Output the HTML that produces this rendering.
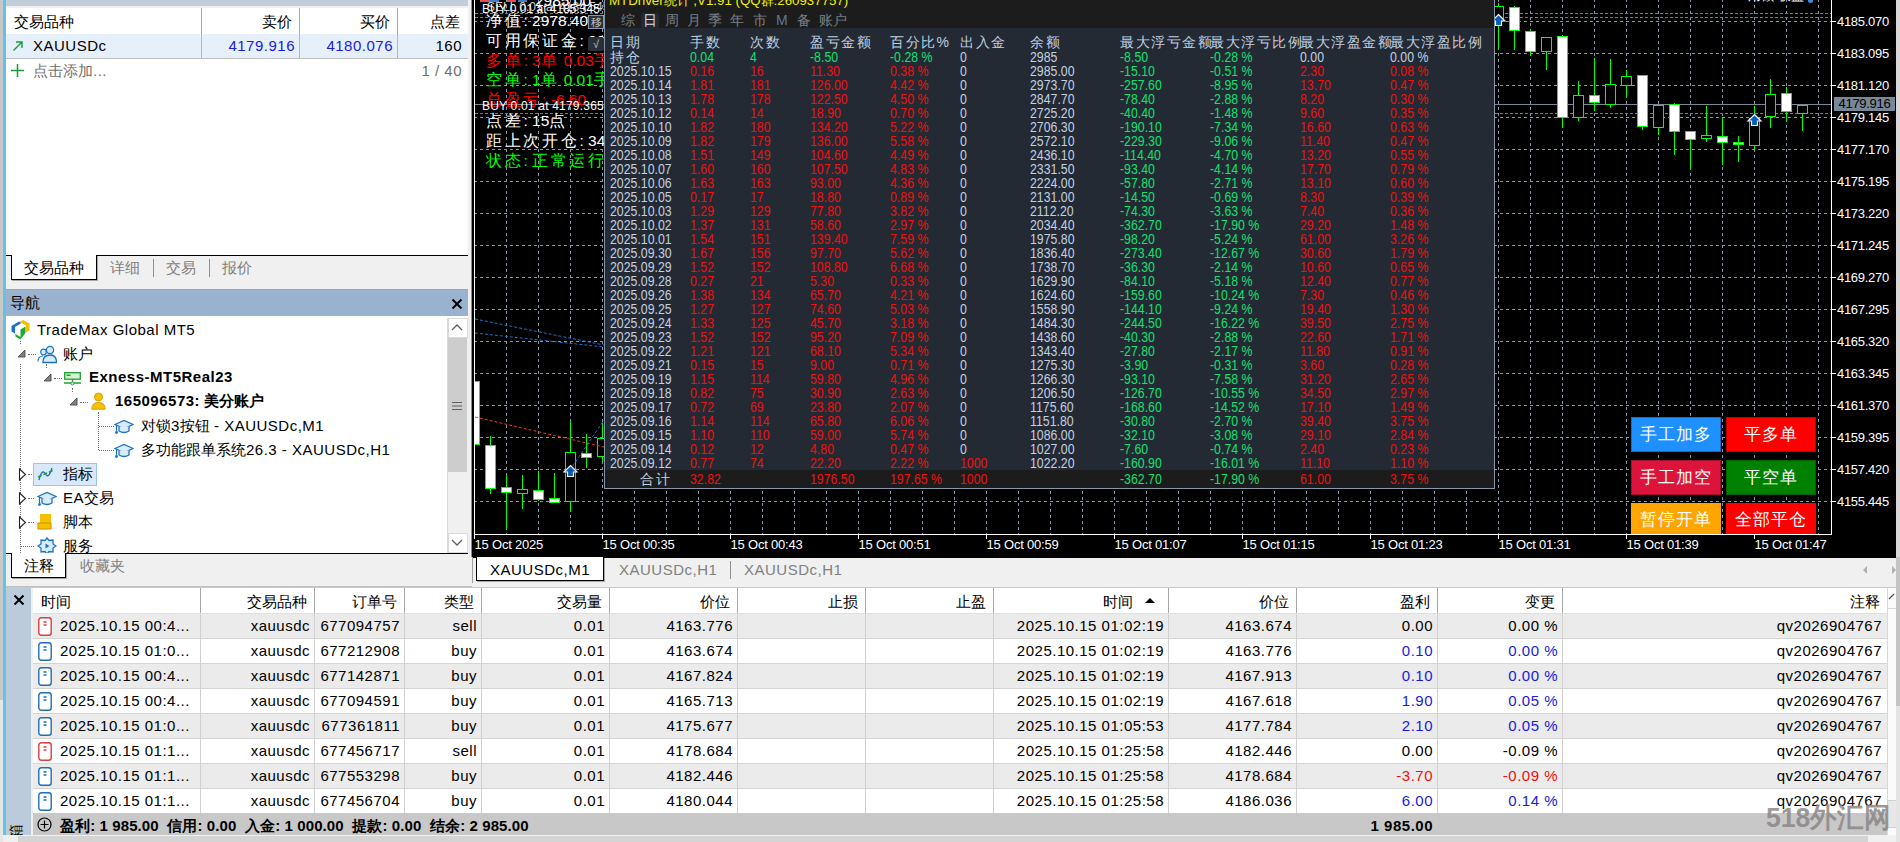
<!DOCTYPE html><html><head><meta charset="utf-8"><style>

*{box-sizing:border-box}
html,body{margin:0;padding:0;width:1900px;height:842px;overflow:hidden;background:#f0f0f0;font-family:"Liberation Sans",sans-serif;}
.ab{position:absolute;white-space:nowrap}
.t15{font-size:15px;line-height:18px}
.r{text-align:right}
.L{letter-spacing:0.5px}
.d{font-size:14px;line-height:14px;transform:scaleX(0.88);transform-origin:0 0}

</style></head><body>
<div class="ab" style="left:0;top:0;width:3px;height:700px;background:#c8c8c8"></div>
<div class="ab" style="left:0;top:700px;width:3px;height:142px;background:#e6e6e6"></div>
<div class="ab" style="left:3px;top:0;width:3px;height:835px;background:#5ec4ea"></div>
<div class="ab" style="left:6px;top:0;width:462px;height:6px;background:#c0cedc"></div>
<div class="ab" style="left:6px;top:6px;width:462px;height:2px;background:#f0f0f0"></div>
<div class="ab" style="left:6px;top:8px;width:462px;height:247px;background:#fff"></div>
<div class="ab" style="left:201px;top:8px;width:1px;height:50px;background:#a8a8a8"></div>
<div class="ab" style="left:299px;top:8px;width:1px;height:50px;background:#a8a8a8"></div>
<div class="ab" style="left:397px;top:8px;width:1px;height:50px;background:#a8a8a8"></div>
<div class="ab t15" style="left:14px;top:13px;color:#000">交易品种</div>
<div class="ab t15 r" style="left:200px;width:92px;top:13px">卖价</div>
<div class="ab t15 r" style="left:298px;width:92px;top:13px">买价</div>
<div class="ab t15 r" style="left:396px;width:64px;top:13px">点差</div>
<div class="ab" style="left:6px;top:34px;width:462px;height:24px;background:#e6f0fb"></div>
<div class="ab" style="left:201px;top:34px;width:1px;height:24px;background:#b8b8b8"></div>
<div class="ab" style="left:299px;top:34px;width:1px;height:24px;background:#b8b8b8"></div>
<div class="ab" style="left:397px;top:34px;width:1px;height:24px;background:#b8b8b8"></div>
<div class="ab" style="left:6px;top:58px;width:462px;height:1px;background:#c0c0c0"></div>
<svg class="ab" style="left:12px;top:40px" width="12" height="12"><path d="M1.5 10.5 L10 2 M4 2 H10 V8" stroke="#1a9a3a" stroke-width="1.4" fill="none"/></svg>
<div class="ab t15" style="left:33px;top:37px"><span class="L">XAUUSDc</span></div>
<div class="ab t15 r" style="left:200px;width:95px;top:37px;color:#1a1ae0"><span class="L">4179.916</span></div>
<div class="ab t15 r" style="left:298px;width:95px;top:37px;color:#1a1ae0"><span class="L">4180.076</span></div>
<div class="ab t15 r" style="left:396px;width:66px;top:37px"><span class="L">160</span></div>
<svg class="ab" style="left:10px;top:63px" width="15" height="15"><path d="M7.5 1 V14 M1 7.5 H14" stroke="#1a9a3a" stroke-width="1.5"/></svg>
<div class="ab t15" style="left:33px;top:62px;color:#707070">点击添加<span class="L">...</span></div>
<div class="ab t15 r" style="left:396px;width:66px;top:62px;color:#707070"><span class="L">1 / 40</span></div>
<div class="ab" style="left:6px;top:255px;width:462px;height:34px;background:#f0f0f0;border-top:1px solid #000"></div>
<div class="ab" style="left:11px;top:255px;width:86px;height:25px;background:#fff;border:1px solid #000;border-top:none;box-shadow:1px 1px 0 #a8a8a8"></div>
<div class="ab t15" style="left:24px;top:259px">交易品种</div>
<div class="ab t15" style="left:110px;top:259px;color:#808080">详细</div>
<div class="ab" style="left:153px;top:259px;width:1px;height:18px;background:#909090"></div>
<div class="ab t15" style="left:166px;top:259px;color:#808080">交易</div>
<div class="ab" style="left:209px;top:259px;width:1px;height:18px;background:#909090"></div>
<div class="ab t15" style="left:222px;top:259px;color:#808080">报价</div>
<div class="ab" style="left:6px;top:289px;width:462px;height:27px;background:#98b2d0"></div>
<div class="ab t15" style="left:10px;top:294px">导航</div>
<div class="ab" style="left:6px;top:289px;width:462px;height:1px;background:#a4a4a4"></div>
<svg class="ab" style="left:451px;top:298px" width="12" height="11"><path d="M1.5 1.5 L10.5 10.5 M10.5 1.5 L1.5 10.5" stroke="#000" stroke-width="2"/></svg>
<div class="ab" style="left:6px;top:316px;width:462px;height:237px;background:#fff"></div>
<div class="ab" style="left:447px;top:318px;width:21px;height:235px;background:#f0f0f0;border-left:1px solid #dadada"></div>
<div class="ab" style="left:448px;top:318px;width:20px;height:20px;background:#fff;border:1px solid #dadada"></div>
<svg class="ab" style="left:450px;top:322px" width="14" height="10"><path d="M2 8 L7 3 L12 8" stroke="#606060" stroke-width="1.3" fill="none"/></svg>
<div class="ab" style="left:448px;top:338px;width:19px;height:134px;background:#cdcdcd"></div>
<svg class="ab" style="left:451px;top:400px" width="12" height="12"><path d="M1 2.5 H11 M1 6 H11 M1 9.5 H11" stroke="#606060" stroke-width="1.2"/></svg>
<div class="ab" style="left:448px;top:533px;width:20px;height:20px;background:#fff;border:1px solid #dadada"></div>
<svg class="ab" style="left:450px;top:538px" width="14" height="10"><path d="M2 2 L7 7 L12 2" stroke="#606060" stroke-width="1.3" fill="none"/></svg>
<div class="ab" style="left:6px;top:553px;width:462px;height:1px;background:#000"></div>
<svg class="ab" style="left:10px;top:319px" width="20" height="21"><path d="M1.5 7 L9 2.5 L11.5 4 L5 8 L5 14.5 L1.5 12.5 Z" fill="#1a6fd0"/><path d="M9.5 2.8 L13 1 L19.5 4.5 L19.5 11.5 L16 13.5 L16 6.5 Z" fill="#f2c200"/><path d="M5.5 15 L10.5 18 L10.5 10.5 L15.5 7.5 L15.5 14 L10.5 20.5 L5.5 17.5 Z" fill="#1ea83a"/></svg>
<div class="ab t15" style="left:37px;top:321px"><span class="L">TradeMax Global MT5</span></div>
<div class="ab" style="left:20px;top:364px;width:0;height:189px;border-left:1px dotted #707070"></div>
<div class="ab" style="left:20px;top:341px;width:0;height:3px;border-left:1px dotted #707070"></div>
<svg class="ab" style="left:17px;top:349px" width="9" height="9"><path d="M8 1 V8 H1 Z" fill="#808080" stroke="#404040" stroke-width="0.8"/></svg>
<div class="ab" style="left:28px;top:354px;width:8px;height:0;border-top:1px dotted #707070"></div>
<svg class="ab" style="left:37px;top:345px" width="20" height="19"><circle cx="13" cy="5" r="3.6" fill="#d8ecfa" stroke="#1f72c0" stroke-width="1.3"/><path d="M6 17.5 Q6 10 13 10 Q19.5 10 19.5 17.5 Z" fill="#d8ecfa" stroke="#1f72c0" stroke-width="1.3"/><circle cx="6.5" cy="7" r="2.8" fill="#d8ecfa" stroke="#1f72c0" stroke-width="1.2"/><path d="M1 16.5 Q1 11 6 11" fill="none" stroke="#1f72c0" stroke-width="1.2"/></svg>
<div class="ab t15" style="left:63px;top:345px">账户</div>
<div class="ab" style="left:46px;top:364px;width:0;height:4px;border-left:1px dotted #707070"></div>
<svg class="ab" style="left:43px;top:373px" width="9" height="9"><path d="M8 1 V8 H1 Z" fill="#808080" stroke="#404040" stroke-width="0.8"/></svg>
<div class="ab" style="left:54px;top:378px;width:8px;height:0;border-top:1px dotted #707070"></div>
<svg class="ab" style="left:64px;top:372px" width="17" height="14"><rect x="0.7" y="0.7" width="15.6" height="6.5" fill="#d8f0d8" stroke="#20a030" stroke-width="1.3"/><rect x="2.5" y="2.5" width="4" height="1.5" fill="#20a030"/><path d="M8.5 7 V11 M0 11 H17" stroke="#20a030" stroke-width="1.3"/><circle cx="8.5" cy="11.5" r="1.5" fill="#fff" stroke="#20a030"/></svg>
<div class="ab t15" style="left:89px;top:368px;font-weight:bold"><span class="L">Exness-MT5Real23</span></div>
<div class="ab" style="left:72px;top:388px;width:0;height:4px;border-left:1px dotted #707070"></div>
<svg class="ab" style="left:69px;top:397px" width="9" height="9"><path d="M8 1 V8 H1 Z" fill="#808080" stroke="#404040" stroke-width="0.8"/></svg>
<div class="ab" style="left:80px;top:402px;width:8px;height:0;border-top:1px dotted #707070"></div>
<svg class="ab" style="left:91px;top:392px" width="15" height="18"><circle cx="7.5" cy="5" r="4" fill="#f5c000" stroke="#e0a000"/><path d="M0.8 17.2 Q0.8 10.5 7.5 10.5 Q14.2 10.5 14.2 17.2 Z" fill="#f5c000" stroke="#e0a000"/></svg>
<div class="ab t15" style="left:115px;top:392px;font-weight:bold"><span class="L">165096573:</span> 美分账户</div>
<div class="ab" style="left:98px;top:412px;width:0;height:38px;border-left:1px dotted #707070"></div>
<div class="ab" style="left:99px;top:426px;width:15px;height:0;border-top:1px dotted #707070"></div>
<div class="ab" style="left:99px;top:450px;width:15px;height:0;border-top:1px dotted #707070"></div>
<svg class="ab" style="left:114px;top:419px" width="20" height="16"><path d="M1 5.5 L10 1.5 L19 5.5 L10 9.5 Z" fill="#d8ecfa" stroke="#1f72c0" stroke-width="1.3"/><path d="M5 7.5 V12 Q10 15 15 12 V7.5" fill="#d8ecfa" stroke="#1f72c0" stroke-width="1.3"/><path d="M2.5 6 V12.5" stroke="#1f72c0" stroke-width="1.2"/><circle cx="2.5" cy="13.5" r="1.4" fill="#1f72c0"/></svg>
<div class="ab t15" style="left:141px;top:417px">对锁<span class="L">3</span>按钮 <span class="L">- XAUUSDc,M1</span></div>
<svg class="ab" style="left:114px;top:443px" width="20" height="16"><path d="M1 5.5 L10 1.5 L19 5.5 L10 9.5 Z" fill="#d8ecfa" stroke="#1f72c0" stroke-width="1.3"/><path d="M5 7.5 V12 Q10 15 15 12 V7.5" fill="#d8ecfa" stroke="#1f72c0" stroke-width="1.3"/><path d="M2.5 6 V12.5" stroke="#1f72c0" stroke-width="1.2"/><circle cx="2.5" cy="13.5" r="1.4" fill="#1f72c0"/></svg>
<div class="ab t15" style="left:141px;top:441px">多功能跟单系统<span class="L">26.3 - XAUUSDc,H1</span></div>
<svg class="ab" style="left:18px;top:468px" width="9" height="13"><path d="M1.5 1 L7.5 6.5 L1.5 12 Z" fill="#fff" stroke="#202020" stroke-width="1.1"/></svg>
<div class="ab" style="left:28px;top:474px;width:6px;height:0;border-top:1px dotted #707070"></div>
<div class="ab" style="left:33px;top:463px;width:64px;height:23px;background:#d9e8fa;border:1px solid #99c4f0"></div>
<svg class="ab" style="left:37px;top:466px" width="19" height="16"><path d="M2 14 Q5 2 8.5 8 Q11.5 13.5 15 2" fill="none" stroke="#1f6fb8" stroke-width="1.3"/><path d="M1 11 L17 4" stroke="#20a030" stroke-width="1.5" stroke-dasharray="4 2"/></svg>
<div class="ab t15" style="left:63px;top:465px">指标</div>
<svg class="ab" style="left:18px;top:492px" width="9" height="13"><path d="M1.5 1 L7.5 6.5 L1.5 12 Z" fill="#fff" stroke="#202020" stroke-width="1.1"/></svg>
<div class="ab" style="left:28px;top:498px;width:6px;height:0;border-top:1px dotted #707070"></div>
<svg class="ab" style="left:37px;top:491px" width="20" height="16"><path d="M1 5.5 L10 1.5 L19 5.5 L10 9.5 Z" fill="#d8ecfa" stroke="#1f72c0" stroke-width="1.3"/><path d="M5 7.5 V12 Q10 15 15 12 V7.5" fill="#d8ecfa" stroke="#1f72c0" stroke-width="1.3"/><path d="M2.5 6 V12.5" stroke="#1f72c0" stroke-width="1.2"/><circle cx="2.5" cy="13.5" r="1.4" fill="#1f72c0"/></svg>
<div class="ab t15" style="left:63px;top:489px"><span class="L">EA</span>交易</div>
<svg class="ab" style="left:18px;top:516px" width="9" height="13"><path d="M1.5 1 L7.5 6.5 L1.5 12 Z" fill="#fff" stroke="#202020" stroke-width="1.1"/></svg>
<div class="ab" style="left:28px;top:522px;width:6px;height:0;border-top:1px dotted #707070"></div>
<svg class="ab" style="left:37px;top:513px" width="17" height="17"><rect x="3" y="1" width="11" height="12" fill="#f5c000"/><rect x="1" y="10" width="13" height="6" fill="#f5c000" stroke="#d09000"/></svg>
<div class="ab t15" style="left:63px;top:513px">脚本</div>
<div class="ab" style="left:20px;top:546px;width:14px;height:0;border-top:1px dotted #707070"></div>
<svg class="ab" style="left:37px;top:537px" width="20" height="16"><path d="M10 1 L12 3.5 L16 3 L16 7 L19 9 L16 11 L16 15 L12 14.5 L10 17 L8 14.5 L4 15 L4 11 L1 9 L4 7 L4 3 L8 3.5 Z" fill="#d8ecfa" stroke="#1f72c0" stroke-width="1.3"/><path d="M8.5 6.5 L12.5 9 L8.5 11.5 Z" fill="#1f72c0"/></svg>
<div class="ab" style="left:6px;top:316px;width:441px;height:237px;overflow:hidden"><div class="ab t15" style="left:57px;top:221px">服务</div></div>
<div class="ab" style="left:6px;top:553px;width:462px;height:1px;background:#000"></div>
<div class="ab" style="left:11px;top:553px;width:55px;height:25px;background:#fff;border:1px solid #000;border-top:none;box-shadow:1px 1px 0 #a8a8a8"></div>
<div class="ab t15" style="left:24px;top:557px">注释</div>
<div class="ab t15" style="left:80px;top:557px;color:#808080">收藏夹</div>
<div class="ab" style="left:6px;top:586px;width:466px;height:1px;background:#c0c0c0"></div>
<div class="ab" style="left:468px;top:0;width:4px;height:557px;background:#f0f0f0"></div>
<div class="ab" style="left:471px;top:0;width:1px;height:557px;background:#8c8c8c"></div>
<div class="ab" style="left:472px;top:0;width:1424px;height:558px;background:#000;overflow:hidden">
<svg width="1424" height="557" style="position:absolute;left:0;top:0">
<line x1="2" y1="21.5" x2="1359" y2="21.5" stroke="#8296ac" stroke-width="1" stroke-dasharray="3 3"/>
<line x1="2" y1="53.5" x2="1359" y2="53.5" stroke="#8296ac" stroke-width="1" stroke-dasharray="3 3"/>
<line x1="2" y1="85.5" x2="1359" y2="85.5" stroke="#8296ac" stroke-width="1" stroke-dasharray="3 3"/>
<line x1="2" y1="117.5" x2="1359" y2="117.5" stroke="#8296ac" stroke-width="1" stroke-dasharray="3 3"/>
<line x1="2" y1="149.5" x2="1359" y2="149.5" stroke="#8296ac" stroke-width="1" stroke-dasharray="3 3"/>
<line x1="2" y1="181.5" x2="1359" y2="181.5" stroke="#8296ac" stroke-width="1" stroke-dasharray="3 3"/>
<line x1="2" y1="213.5" x2="1359" y2="213.5" stroke="#8296ac" stroke-width="1" stroke-dasharray="3 3"/>
<line x1="2" y1="245.5" x2="1359" y2="245.5" stroke="#8296ac" stroke-width="1" stroke-dasharray="3 3"/>
<line x1="2" y1="277.5" x2="1359" y2="277.5" stroke="#8296ac" stroke-width="1" stroke-dasharray="3 3"/>
<line x1="2" y1="309.5" x2="1359" y2="309.5" stroke="#8296ac" stroke-width="1" stroke-dasharray="3 3"/>
<line x1="2" y1="341.5" x2="1359" y2="341.5" stroke="#8296ac" stroke-width="1" stroke-dasharray="3 3"/>
<line x1="2" y1="373.5" x2="1359" y2="373.5" stroke="#8296ac" stroke-width="1" stroke-dasharray="3 3"/>
<line x1="2" y1="405.5" x2="1359" y2="405.5" stroke="#8296ac" stroke-width="1" stroke-dasharray="3 3"/>
<line x1="2" y1="437.5" x2="1359" y2="437.5" stroke="#8296ac" stroke-width="1" stroke-dasharray="3 3"/>
<line x1="2" y1="469.5" x2="1359" y2="469.5" stroke="#8296ac" stroke-width="1" stroke-dasharray="3 3"/>
<line x1="2" y1="501.5" x2="1359" y2="501.5" stroke="#8296ac" stroke-width="1" stroke-dasharray="3 3"/>
<line x1="34.5" y1="-1" x2="34.5" y2="534" stroke="#8296ac" stroke-width="1" stroke-dasharray="3 3"/>
<line x1="66.5" y1="-1" x2="66.5" y2="534" stroke="#8296ac" stroke-width="1" stroke-dasharray="3 3"/>
<line x1="98.5" y1="-1" x2="98.5" y2="534" stroke="#8296ac" stroke-width="1" stroke-dasharray="3 3"/>
<line x1="130.5" y1="-1" x2="130.5" y2="534" stroke="#8296ac" stroke-width="1" stroke-dasharray="3 3"/>
<line x1="162.5" y1="-1" x2="162.5" y2="534" stroke="#8296ac" stroke-width="1" stroke-dasharray="3 3"/>
<line x1="194.5" y1="-1" x2="194.5" y2="534" stroke="#8296ac" stroke-width="1" stroke-dasharray="3 3"/>
<line x1="226.5" y1="-1" x2="226.5" y2="534" stroke="#8296ac" stroke-width="1" stroke-dasharray="3 3"/>
<line x1="258.5" y1="-1" x2="258.5" y2="534" stroke="#8296ac" stroke-width="1" stroke-dasharray="3 3"/>
<line x1="290.5" y1="-1" x2="290.5" y2="534" stroke="#8296ac" stroke-width="1" stroke-dasharray="3 3"/>
<line x1="322.5" y1="-1" x2="322.5" y2="534" stroke="#8296ac" stroke-width="1" stroke-dasharray="3 3"/>
<line x1="354.5" y1="-1" x2="354.5" y2="534" stroke="#8296ac" stroke-width="1" stroke-dasharray="3 3"/>
<line x1="386.5" y1="-1" x2="386.5" y2="534" stroke="#8296ac" stroke-width="1" stroke-dasharray="3 3"/>
<line x1="418.5" y1="-1" x2="418.5" y2="534" stroke="#8296ac" stroke-width="1" stroke-dasharray="3 3"/>
<line x1="450.5" y1="-1" x2="450.5" y2="534" stroke="#8296ac" stroke-width="1" stroke-dasharray="3 3"/>
<line x1="482.5" y1="-1" x2="482.5" y2="534" stroke="#8296ac" stroke-width="1" stroke-dasharray="3 3"/>
<line x1="514.5" y1="-1" x2="514.5" y2="534" stroke="#8296ac" stroke-width="1" stroke-dasharray="3 3"/>
<line x1="546.5" y1="-1" x2="546.5" y2="534" stroke="#8296ac" stroke-width="1" stroke-dasharray="3 3"/>
<line x1="578.5" y1="-1" x2="578.5" y2="534" stroke="#8296ac" stroke-width="1" stroke-dasharray="3 3"/>
<line x1="610.5" y1="-1" x2="610.5" y2="534" stroke="#8296ac" stroke-width="1" stroke-dasharray="3 3"/>
<line x1="642.5" y1="-1" x2="642.5" y2="534" stroke="#8296ac" stroke-width="1" stroke-dasharray="3 3"/>
<line x1="674.5" y1="-1" x2="674.5" y2="534" stroke="#8296ac" stroke-width="1" stroke-dasharray="3 3"/>
<line x1="706.5" y1="-1" x2="706.5" y2="534" stroke="#8296ac" stroke-width="1" stroke-dasharray="3 3"/>
<line x1="738.5" y1="-1" x2="738.5" y2="534" stroke="#8296ac" stroke-width="1" stroke-dasharray="3 3"/>
<line x1="770.5" y1="-1" x2="770.5" y2="534" stroke="#8296ac" stroke-width="1" stroke-dasharray="3 3"/>
<line x1="802.5" y1="-1" x2="802.5" y2="534" stroke="#8296ac" stroke-width="1" stroke-dasharray="3 3"/>
<line x1="834.5" y1="-1" x2="834.5" y2="534" stroke="#8296ac" stroke-width="1" stroke-dasharray="3 3"/>
<line x1="866.5" y1="-1" x2="866.5" y2="534" stroke="#8296ac" stroke-width="1" stroke-dasharray="3 3"/>
<line x1="898.5" y1="-1" x2="898.5" y2="534" stroke="#8296ac" stroke-width="1" stroke-dasharray="3 3"/>
<line x1="930.5" y1="-1" x2="930.5" y2="534" stroke="#8296ac" stroke-width="1" stroke-dasharray="3 3"/>
<line x1="962.5" y1="-1" x2="962.5" y2="534" stroke="#8296ac" stroke-width="1" stroke-dasharray="3 3"/>
<line x1="994.5" y1="-1" x2="994.5" y2="534" stroke="#8296ac" stroke-width="1" stroke-dasharray="3 3"/>
<line x1="1026.5" y1="-1" x2="1026.5" y2="534" stroke="#8296ac" stroke-width="1" stroke-dasharray="3 3"/>
<line x1="1058.5" y1="-1" x2="1058.5" y2="534" stroke="#8296ac" stroke-width="1" stroke-dasharray="3 3"/>
<line x1="1090.5" y1="-1" x2="1090.5" y2="534" stroke="#8296ac" stroke-width="1" stroke-dasharray="3 3"/>
<line x1="1122.5" y1="-1" x2="1122.5" y2="534" stroke="#8296ac" stroke-width="1" stroke-dasharray="3 3"/>
<line x1="1154.5" y1="-1" x2="1154.5" y2="534" stroke="#8296ac" stroke-width="1" stroke-dasharray="3 3"/>
<line x1="1186.5" y1="-1" x2="1186.5" y2="534" stroke="#8296ac" stroke-width="1" stroke-dasharray="3 3"/>
<line x1="1218.5" y1="-1" x2="1218.5" y2="534" stroke="#8296ac" stroke-width="1" stroke-dasharray="3 3"/>
<line x1="1250.5" y1="-1" x2="1250.5" y2="534" stroke="#8296ac" stroke-width="1" stroke-dasharray="3 3"/>
<line x1="1282.5" y1="-1" x2="1282.5" y2="534" stroke="#8296ac" stroke-width="1" stroke-dasharray="3 3"/>
<line x1="1314.5" y1="-1" x2="1314.5" y2="534" stroke="#8296ac" stroke-width="1" stroke-dasharray="3 3"/>
<line x1="1346.5" y1="-1" x2="1346.5" y2="534" stroke="#8296ac" stroke-width="1" stroke-dasharray="3 3"/>
<line x1="3" y1="13.5" x2="1359" y2="13.5" stroke="#00d000" stroke-width="1" stroke-dasharray="3 2"/>
<line x1="3" y1="17.5" x2="1359" y2="17.5" stroke="#00d000" stroke-width="1" stroke-dasharray="3 2"/>
<line x1="3" y1="113.5" x2="1359" y2="113.5" stroke="#00d000" stroke-width="1" stroke-dasharray="3 2"/>
<line x1="3" y1="104.5" x2="1359" y2="104.5" stroke="#7a8898" stroke-width="1"/>
<line x1="2.5" y1="372" x2="2.5" y2="446" stroke="#00ff00" stroke-width="1"/>
<rect x="-2.5" y="381.5" width="10" height="63" fill="#fff" stroke="#00ff00" stroke-width="1"/>
<line x1="18.5" y1="436" x2="18.5" y2="494" stroke="#00ff00" stroke-width="1"/>
<rect x="13.5" y="445.5" width="10" height="43" fill="#fff" stroke="#00ff00" stroke-width="1"/>
<line x1="34.5" y1="476" x2="34.5" y2="529" stroke="#00ff00" stroke-width="1"/>
<rect x="29.5" y="487.5" width="10" height="5" fill="#fff" stroke="#00ff00" stroke-width="1"/>
<line x1="50.5" y1="475" x2="50.5" y2="509" stroke="#00ff00" stroke-width="1"/>
<rect x="45.5" y="489.5" width="10" height="4" fill="#000" stroke="#00ff00" stroke-width="1"/>
<line x1="66.5" y1="471" x2="66.5" y2="501" stroke="#00ff00" stroke-width="1"/>
<rect x="61.5" y="490.5" width="10" height="9" fill="#fff" stroke="#00ff00" stroke-width="1"/>
<line x1="82.5" y1="473" x2="82.5" y2="502" stroke="#00ff00" stroke-width="1"/>
<rect x="77.5" y="498.5" width="10" height="4" fill="#fff" stroke="#00ff00" stroke-width="1"/>
<line x1="98.5" y1="421" x2="98.5" y2="511" stroke="#00ff00" stroke-width="1"/>
<rect x="93.5" y="452.5" width="10" height="49" fill="#000" stroke="#00ff00" stroke-width="1"/>
<line x1="114.5" y1="434" x2="114.5" y2="468" stroke="#00ff00" stroke-width="1"/>
<rect x="109.5" y="453.5" width="10" height="4" fill="#fff" stroke="#00ff00" stroke-width="1"/>
<line x1="130.5" y1="423" x2="130.5" y2="462" stroke="#00ff00" stroke-width="1"/>
<rect x="125.5" y="438.5" width="10" height="18" fill="#000" stroke="#00ff00" stroke-width="1"/>
<line x1="1026.5" y1="3" x2="1026.5" y2="49" stroke="#00ff00" stroke-width="1"/>
<rect x="1021.5" y="6.5" width="10" height="12" fill="#000" stroke="#00ff00" stroke-width="1"/>
<line x1="1042.5" y1="6" x2="1042.5" y2="50" stroke="#00ff00" stroke-width="1"/>
<rect x="1037.5" y="7.5" width="10" height="23" fill="#fff" stroke="#00ff00" stroke-width="1"/>
<line x1="1058.5" y1="29" x2="1058.5" y2="55" stroke="#00ff00" stroke-width="1"/>
<rect x="1053.5" y="31.5" width="10" height="20" fill="#fff" stroke="#00ff00" stroke-width="1"/>
<line x1="1074.5" y1="37" x2="1074.5" y2="70" stroke="#00ff00" stroke-width="1"/>
<rect x="1069.5" y="37.5" width="10" height="14" fill="#000" stroke="#00ff00" stroke-width="1"/>
<line x1="1090.5" y1="36" x2="1090.5" y2="127" stroke="#00ff00" stroke-width="1"/>
<rect x="1085.5" y="36.5" width="10" height="81" fill="#fff" stroke="#00ff00" stroke-width="1"/>
<line x1="1106.5" y1="81" x2="1106.5" y2="121" stroke="#00ff00" stroke-width="1"/>
<rect x="1101.5" y="95.5" width="10" height="22" fill="#000" stroke="#00ff00" stroke-width="1"/>
<line x1="1122.5" y1="58" x2="1122.5" y2="111" stroke="#00ff00" stroke-width="1"/>
<rect x="1117.5" y="95.5" width="10" height="7" fill="#fff" stroke="#00ff00" stroke-width="1"/>
<line x1="1138.5" y1="59" x2="1138.5" y2="108" stroke="#00ff00" stroke-width="1"/>
<rect x="1133.5" y="84.5" width="10" height="20" fill="#000" stroke="#00ff00" stroke-width="1"/>
<line x1="1154.5" y1="70" x2="1154.5" y2="97" stroke="#00ff00" stroke-width="1"/>
<rect x="1149.5" y="76.5" width="10" height="9" fill="#000" stroke="#00ff00" stroke-width="1"/>
<line x1="1170.5" y1="75" x2="1170.5" y2="130" stroke="#00ff00" stroke-width="1"/>
<rect x="1165.5" y="75.5" width="10" height="51" fill="#fff" stroke="#00ff00" stroke-width="1"/>
<line x1="1186.5" y1="105" x2="1186.5" y2="135" stroke="#00ff00" stroke-width="1"/>
<rect x="1181.5" y="105.5" width="10" height="22" fill="#000" stroke="#00ff00" stroke-width="1"/>
<line x1="1202.5" y1="103" x2="1202.5" y2="155" stroke="#00ff00" stroke-width="1"/>
<rect x="1197.5" y="104.5" width="10" height="27" fill="#fff" stroke="#00ff00" stroke-width="1"/>
<line x1="1218.5" y1="131" x2="1218.5" y2="170" stroke="#00ff00" stroke-width="1"/>
<rect x="1213.5" y="131.5" width="10" height="8" fill="#fff" stroke="#00ff00" stroke-width="1"/>
<line x1="1234.5" y1="106" x2="1234.5" y2="142" stroke="#00ff00" stroke-width="1"/>
<rect x="1229.5" y="135.5" width="10" height="3" fill="#000" stroke="#00ff00" stroke-width="1"/>
<line x1="1250.5" y1="118" x2="1250.5" y2="165" stroke="#00ff00" stroke-width="1"/>
<rect x="1245.5" y="136.5" width="10" height="6" fill="#fff" stroke="#00ff00" stroke-width="1"/>
<line x1="1266.5" y1="136" x2="1266.5" y2="162" stroke="#00ff00" stroke-width="1"/>
<rect x="1261.5" y="142.5" width="10" height="2" fill="#fff" stroke="#00ff00" stroke-width="1"/>
<line x1="1282.5" y1="106" x2="1282.5" y2="150" stroke="#00ff00" stroke-width="1"/>
<rect x="1277.5" y="118.5" width="10" height="27" fill="#000" stroke="#00ff00" stroke-width="1"/>
<line x1="1298.5" y1="79" x2="1298.5" y2="128" stroke="#00ff00" stroke-width="1"/>
<rect x="1293.5" y="94.5" width="10" height="22" fill="#000" stroke="#00ff00" stroke-width="1"/>
<line x1="1314.5" y1="87" x2="1314.5" y2="121" stroke="#00ff00" stroke-width="1"/>
<rect x="1309.5" y="93.5" width="10" height="18" fill="#fff" stroke="#00ff00" stroke-width="1"/>
<line x1="1330.5" y1="105" x2="1330.5" y2="131" stroke="#00ff00" stroke-width="1"/>
<rect x="1325.5" y="105.5" width="10" height="8" fill="#000" stroke="#00ff00" stroke-width="1"/>
<path d="M3 319 L132 345" stroke="#1e70d0" stroke-width="1" stroke-dasharray="3 2" fill="none"/>
<path d="M3 333 L132 347" stroke="#1e70d0" stroke-width="1" stroke-dasharray="3 2" fill="none"/>
<path d="M3 417 L132 447" stroke="#e04020" stroke-width="1" stroke-dasharray="3 2" fill="none"/>
<path d="M98 470 L132 420" stroke="#1e70d0" stroke-width="1" stroke-dasharray="3 2" fill="none"/>
<path d="M98.5 465.5 L105.0 472 L101.5 472 L101.5 476.5 L95.5 476.5 L95.5 472 L92.0 472 Z" fill="#0a5cb8" stroke="#f0f4ff" stroke-width="1.2"/>
<path d="M1282.5 114.5 L1289.0 121 L1285.5 121 L1285.5 125.5 L1279.5 125.5 L1279.5 121 L1276.0 121 Z" fill="#0a5cb8" stroke="#f0f4ff" stroke-width="1.2"/>
<path d="M1026.5 14.5 L1033.0 21 L1029.5 21 L1029.5 25.5 L1023.5 25.5 L1023.5 21 L1020.0 21 Z" fill="#0a5cb8" stroke="#f0f4ff" stroke-width="1.2"/>
<rect x="0" y="0" width="2.5" height="557" fill="#000"/>
<line x1="2.5" y1="0" x2="2.5" y2="534" stroke="#fff" stroke-width="1"/>
<line x1="2" y1="534.5" x2="1359.5" y2="534.5" stroke="#fff" stroke-width="1"/>
<line x1="1359.5" y1="0" x2="1359.5" y2="535" stroke="#fff" stroke-width="1"/>
<line x1="1359" y1="21.5" x2="1364" y2="21.5" stroke="#fff" stroke-width="1"/>
<line x1="1359" y1="53.5" x2="1364" y2="53.5" stroke="#fff" stroke-width="1"/>
<line x1="1359" y1="85.5" x2="1364" y2="85.5" stroke="#fff" stroke-width="1"/>
<line x1="1359" y1="117.5" x2="1364" y2="117.5" stroke="#fff" stroke-width="1"/>
<line x1="1359" y1="149.5" x2="1364" y2="149.5" stroke="#fff" stroke-width="1"/>
<line x1="1359" y1="181.5" x2="1364" y2="181.5" stroke="#fff" stroke-width="1"/>
<line x1="1359" y1="213.5" x2="1364" y2="213.5" stroke="#fff" stroke-width="1"/>
<line x1="1359" y1="245.5" x2="1364" y2="245.5" stroke="#fff" stroke-width="1"/>
<line x1="1359" y1="277.5" x2="1364" y2="277.5" stroke="#fff" stroke-width="1"/>
<line x1="1359" y1="309.5" x2="1364" y2="309.5" stroke="#fff" stroke-width="1"/>
<line x1="1359" y1="341.5" x2="1364" y2="341.5" stroke="#fff" stroke-width="1"/>
<line x1="1359" y1="373.5" x2="1364" y2="373.5" stroke="#fff" stroke-width="1"/>
<line x1="1359" y1="405.5" x2="1364" y2="405.5" stroke="#fff" stroke-width="1"/>
<line x1="1359" y1="437.5" x2="1364" y2="437.5" stroke="#fff" stroke-width="1"/>
<line x1="1359" y1="469.5" x2="1364" y2="469.5" stroke="#fff" stroke-width="1"/>
<line x1="1359" y1="501.5" x2="1364" y2="501.5" stroke="#fff" stroke-width="1"/>
<line x1="2.5" y1="534" x2="2.5" y2="539" stroke="#fff" stroke-width="1"/>
<line x1="130.5" y1="534" x2="130.5" y2="539" stroke="#fff" stroke-width="1"/>
<line x1="258.5" y1="534" x2="258.5" y2="539" stroke="#fff" stroke-width="1"/>
<line x1="386.5" y1="534" x2="386.5" y2="539" stroke="#fff" stroke-width="1"/>
<line x1="514.5" y1="534" x2="514.5" y2="539" stroke="#fff" stroke-width="1"/>
<line x1="642.5" y1="534" x2="642.5" y2="539" stroke="#fff" stroke-width="1"/>
<line x1="770.5" y1="534" x2="770.5" y2="539" stroke="#fff" stroke-width="1"/>
<line x1="898.5" y1="534" x2="898.5" y2="539" stroke="#fff" stroke-width="1"/>
<line x1="1026.5" y1="534" x2="1026.5" y2="539" stroke="#fff" stroke-width="1"/>
<line x1="1154.5" y1="534" x2="1154.5" y2="539" stroke="#fff" stroke-width="1"/>
<line x1="1282.5" y1="534" x2="1282.5" y2="539" stroke="#fff" stroke-width="1"/>
</svg>
<div class="ab" style="left:1365px;top:13.5px;font-size:13px;line-height:16px;color:#fff;letter-spacing:-0.3px">4185.070</div>
<div class="ab" style="left:1365px;top:45.5px;font-size:13px;line-height:16px;color:#fff;letter-spacing:-0.3px">4183.095</div>
<div class="ab" style="left:1365px;top:77.5px;font-size:13px;line-height:16px;color:#fff;letter-spacing:-0.3px">4181.120</div>
<div class="ab" style="left:1365px;top:109.5px;font-size:13px;line-height:16px;color:#fff;letter-spacing:-0.3px">4179.145</div>
<div class="ab" style="left:1365px;top:141.5px;font-size:13px;line-height:16px;color:#fff;letter-spacing:-0.3px">4177.170</div>
<div class="ab" style="left:1365px;top:173.5px;font-size:13px;line-height:16px;color:#fff;letter-spacing:-0.3px">4175.195</div>
<div class="ab" style="left:1365px;top:205.5px;font-size:13px;line-height:16px;color:#fff;letter-spacing:-0.3px">4173.220</div>
<div class="ab" style="left:1365px;top:237.5px;font-size:13px;line-height:16px;color:#fff;letter-spacing:-0.3px">4171.245</div>
<div class="ab" style="left:1365px;top:269.5px;font-size:13px;line-height:16px;color:#fff;letter-spacing:-0.3px">4169.270</div>
<div class="ab" style="left:1365px;top:301.5px;font-size:13px;line-height:16px;color:#fff;letter-spacing:-0.3px">4167.295</div>
<div class="ab" style="left:1365px;top:333.5px;font-size:13px;line-height:16px;color:#fff;letter-spacing:-0.3px">4165.320</div>
<div class="ab" style="left:1365px;top:365.5px;font-size:13px;line-height:16px;color:#fff;letter-spacing:-0.3px">4163.345</div>
<div class="ab" style="left:1365px;top:397.5px;font-size:13px;line-height:16px;color:#fff;letter-spacing:-0.3px">4161.370</div>
<div class="ab" style="left:1365px;top:429.5px;font-size:13px;line-height:16px;color:#fff;letter-spacing:-0.3px">4159.395</div>
<div class="ab" style="left:1365px;top:461.5px;font-size:13px;line-height:16px;color:#fff;letter-spacing:-0.3px">4157.420</div>
<div class="ab" style="left:1365px;top:493.5px;font-size:13px;line-height:16px;color:#fff;letter-spacing:-0.3px">4155.445</div>
<div class="ab" style="left:1362px;top:97px;width:61px;height:14px;background:#778899;color:#000;font-size:13px;line-height:14px;text-align:center;letter-spacing:-0.3px">4179.916</div>
<div class="ab" style="left:2.5px;top:537px;font-size:13px;line-height:16px;color:#fff;letter-spacing:-0.2px">15 Oct 2025</div>
<div class="ab" style="left:130.5px;top:537px;font-size:13px;line-height:16px;color:#fff;letter-spacing:-0.2px">15 Oct 00:35</div>
<div class="ab" style="left:258.5px;top:537px;font-size:13px;line-height:16px;color:#fff;letter-spacing:-0.2px">15 Oct 00:43</div>
<div class="ab" style="left:386.5px;top:537px;font-size:13px;line-height:16px;color:#fff;letter-spacing:-0.2px">15 Oct 00:51</div>
<div class="ab" style="left:514.5px;top:537px;font-size:13px;line-height:16px;color:#fff;letter-spacing:-0.2px">15 Oct 00:59</div>
<div class="ab" style="left:642.5px;top:537px;font-size:13px;line-height:16px;color:#fff;letter-spacing:-0.2px">15 Oct 01:07</div>
<div class="ab" style="left:770.5px;top:537px;font-size:13px;line-height:16px;color:#fff;letter-spacing:-0.2px">15 Oct 01:15</div>
<div class="ab" style="left:898.5px;top:537px;font-size:13px;line-height:16px;color:#fff;letter-spacing:-0.2px">15 Oct 01:23</div>
<div class="ab" style="left:1026.5px;top:537px;font-size:13px;line-height:16px;color:#fff;letter-spacing:-0.2px">15 Oct 01:31</div>
<div class="ab" style="left:1154.5px;top:537px;font-size:13px;line-height:16px;color:#fff;letter-spacing:-0.2px">15 Oct 01:39</div>
<div class="ab" style="left:1282.5px;top:537px;font-size:13px;line-height:16px;color:#fff;letter-spacing:-0.2px">15 Oct 01:47</div>
<div class="ab" style="left:1159px;top:417px;width:90px;height:35px;background:#1e90ff;border:1px solid rgba(0,0,0,0.25);color:#fff;font-size:17px;line-height:33px;text-align:center;letter-spacing:1px">手工加多</div>
<div class="ab" style="left:1254px;top:417px;width:90px;height:35px;background:#ff0000;border:1px solid rgba(0,0,0,0.25);color:#fff;font-size:17px;line-height:33px;text-align:center;letter-spacing:1px">平多单</div>
<div class="ab" style="left:1159px;top:460px;width:90px;height:35px;background:#dc143c;border:1px solid rgba(0,0,0,0.25);color:#fff;font-size:17px;line-height:33px;text-align:center;letter-spacing:1px">手工加空</div>
<div class="ab" style="left:1254px;top:460px;width:90px;height:35px;background:#008000;border:1px solid rgba(0,0,0,0.25);color:#fff;font-size:17px;line-height:33px;text-align:center;letter-spacing:1px">平空单</div>
<div class="ab" style="left:1159px;top:503px;width:200px;height:31px;overflow:hidden">
<div class="ab" style="left:0;top:0;width:90px;height:35px;background:#ffa500;color:#fff;font-size:17px;line-height:33px;text-align:center;letter-spacing:1px">暂停开单</div>
<div class="ab" style="left:95px;top:0;width:90px;height:35px;background:#ff0000;color:#fff;font-size:17px;line-height:33px;text-align:center;letter-spacing:1px">全部平仓</div>
</div>
</div>
<div class="ab" style="left:1896px;top:0;width:4px;height:557px;background:#d8d8d8"></div>
<div class="ab" style="left:604px;top:0;width:891px;height:489px;background:#242a33;overflow:hidden">
<div class="ab" style="left:0;top:0;width:100%;height:28px;background:#1c1c1c"></div>
<div class="ab" style="left:5px;top:-7.5px;font-size:13.3px;line-height:16px;color:#f0f000">MTDriver统计 ,V1.91 (QQ群:260937757)</div>
<div class="ab" style="left:37px;top:13px;width:18px;height:15px;background:#242a33;border-radius:2px 2px 0 0"></div>
<div class="ab" style="left:17px;top:12px;font-size:14px;line-height:16px;color:#7a8088">综</div>
<div class="ab" style="left:39px;top:12px;font-size:14px;line-height:16px;color:#d0dcea">日</div>
<div class="ab" style="left:61px;top:12px;font-size:14px;line-height:16px;color:#7a8088">周</div>
<div class="ab" style="left:83px;top:12px;font-size:14px;line-height:16px;color:#7a8088">月</div>
<div class="ab" style="left:104px;top:12px;font-size:14px;line-height:16px;color:#7a8088">季</div>
<div class="ab" style="left:126px;top:12px;font-size:14px;line-height:16px;color:#7a8088">年</div>
<div class="ab" style="left:149px;top:12px;font-size:14px;line-height:16px;color:#7a8088">市</div>
<div class="ab" style="left:172px;top:12px;font-size:14px;line-height:16px;color:#5a7898">M</div>
<div class="ab" style="left:193px;top:12px;font-size:14px;line-height:16px;color:#7a8088">备</div>
<div class="ab" style="left:215px;top:12px;font-size:14px;line-height:16px;color:#7a8088">账户</div>
<div class="ab" style="left:6px;top:34px;font-size:14px;line-height:16px;color:#c0d0e2;letter-spacing:1.5px">日期</div>
<div class="ab" style="left:86px;top:34px;font-size:14px;line-height:16px;color:#c0d0e2;letter-spacing:1.5px">手数</div>
<div class="ab" style="left:146px;top:34px;font-size:14px;line-height:16px;color:#c0d0e2;letter-spacing:1.5px">次数</div>
<div class="ab" style="left:206px;top:34px;font-size:14px;line-height:16px;color:#c0d0e2;letter-spacing:1.5px">盈亏金额</div>
<div class="ab" style="left:286px;top:34px;font-size:14px;line-height:16px;color:#c0d0e2;letter-spacing:1.5px">百分比%</div>
<div class="ab" style="left:356px;top:34px;font-size:14px;line-height:16px;color:#c0d0e2;letter-spacing:1.5px">出入金</div>
<div class="ab" style="left:426px;top:34px;font-size:14px;line-height:16px;color:#c0d0e2;letter-spacing:1.5px">余额</div>
<div class="ab" style="left:516px;top:34px;font-size:14px;line-height:16px;color:#c0d0e2;letter-spacing:1.5px">最大浮亏金额</div>
<div class="ab" style="left:606px;top:34px;font-size:14px;line-height:16px;color:#c0d0e2;letter-spacing:1.5px">最大浮亏比例</div>
<div class="ab" style="left:696px;top:34px;font-size:14px;line-height:16px;color:#c0d0e2;letter-spacing:1.5px">最大浮盈金额</div>
<div class="ab" style="left:786px;top:34px;font-size:14px;line-height:16px;color:#c0d0e2;letter-spacing:1.5px">最大浮盈比例</div>
<div class="ab" style="left:6px;top:49px;font-size:14px;line-height:16px;color:#c0d0e2;letter-spacing:1.5px">持仓</div>
<div class="ab d" style="left:86px;top:50px;color:#10e070">0.04</div>
<div class="ab d" style="left:146px;top:50px;color:#10e070">4</div>
<div class="ab d" style="left:206px;top:50px;color:#10e070">-8.50</div>
<div class="ab d" style="left:286px;top:50px;color:#10e070">-0.28 %</div>
<div class="ab d" style="left:356px;top:50px;color:#c0d0e2">0</div>
<div class="ab d" style="left:426px;top:50px;color:#c0d0e2">2985</div>
<div class="ab d" style="left:516px;top:50px;color:#10e070">-8.50</div>
<div class="ab d" style="left:606px;top:50px;color:#10e070">-0.28 %</div>
<div class="ab d" style="left:696px;top:50px;color:#c0d0e2">0.00</div>
<div class="ab d" style="left:786px;top:50px;color:#c0d0e2">0.00 %</div>
<div class="ab d" style="left:6px;top:64px;color:#c0d0e2">2025.10.15</div>
<div class="ab d" style="left:86px;top:64px;color:#f01010">0.16</div>
<div class="ab d" style="left:146px;top:64px;color:#f01010">16</div>
<div class="ab d" style="left:206px;top:64px;color:#f01010">11.30</div>
<div class="ab d" style="left:286px;top:64px;color:#f01010">0.38 %</div>
<div class="ab d" style="left:356px;top:64px;color:#c0d0e2">0</div>
<div class="ab d" style="left:426px;top:64px;color:#c0d0e2">2985.00</div>
<div class="ab d" style="left:516px;top:64px;color:#10e070">-15.10</div>
<div class="ab d" style="left:606px;top:64px;color:#10e070">-0.51 %</div>
<div class="ab d" style="left:696px;top:64px;color:#f01010">2.30</div>
<div class="ab d" style="left:786px;top:64px;color:#f01010">0.08 %</div>
<div class="ab d" style="left:6px;top:78px;color:#c0d0e2">2025.10.14</div>
<div class="ab d" style="left:86px;top:78px;color:#f01010">1.81</div>
<div class="ab d" style="left:146px;top:78px;color:#f01010">181</div>
<div class="ab d" style="left:206px;top:78px;color:#f01010">126.00</div>
<div class="ab d" style="left:286px;top:78px;color:#f01010">4.42 %</div>
<div class="ab d" style="left:356px;top:78px;color:#c0d0e2">0</div>
<div class="ab d" style="left:426px;top:78px;color:#c0d0e2">2973.70</div>
<div class="ab d" style="left:516px;top:78px;color:#10e070">-257.60</div>
<div class="ab d" style="left:606px;top:78px;color:#10e070">-8.95 %</div>
<div class="ab d" style="left:696px;top:78px;color:#f01010">13.70</div>
<div class="ab d" style="left:786px;top:78px;color:#f01010">0.47 %</div>
<div class="ab d" style="left:6px;top:92px;color:#c0d0e2">2025.10.13</div>
<div class="ab d" style="left:86px;top:92px;color:#f01010">1.78</div>
<div class="ab d" style="left:146px;top:92px;color:#f01010">178</div>
<div class="ab d" style="left:206px;top:92px;color:#f01010">122.50</div>
<div class="ab d" style="left:286px;top:92px;color:#f01010">4.50 %</div>
<div class="ab d" style="left:356px;top:92px;color:#c0d0e2">0</div>
<div class="ab d" style="left:426px;top:92px;color:#c0d0e2">2847.70</div>
<div class="ab d" style="left:516px;top:92px;color:#10e070">-78.40</div>
<div class="ab d" style="left:606px;top:92px;color:#10e070">-2.88 %</div>
<div class="ab d" style="left:696px;top:92px;color:#f01010">8.20</div>
<div class="ab d" style="left:786px;top:92px;color:#f01010">0.30 %</div>
<div class="ab d" style="left:6px;top:106px;color:#c0d0e2">2025.10.12</div>
<div class="ab d" style="left:86px;top:106px;color:#f01010">0.14</div>
<div class="ab d" style="left:146px;top:106px;color:#f01010">14</div>
<div class="ab d" style="left:206px;top:106px;color:#f01010">18.90</div>
<div class="ab d" style="left:286px;top:106px;color:#f01010">0.70 %</div>
<div class="ab d" style="left:356px;top:106px;color:#c0d0e2">0</div>
<div class="ab d" style="left:426px;top:106px;color:#c0d0e2">2725.20</div>
<div class="ab d" style="left:516px;top:106px;color:#10e070">-40.40</div>
<div class="ab d" style="left:606px;top:106px;color:#10e070">-1.48 %</div>
<div class="ab d" style="left:696px;top:106px;color:#f01010">9.60</div>
<div class="ab d" style="left:786px;top:106px;color:#f01010">0.35 %</div>
<div class="ab d" style="left:6px;top:120px;color:#c0d0e2">2025.10.10</div>
<div class="ab d" style="left:86px;top:120px;color:#f01010">1.82</div>
<div class="ab d" style="left:146px;top:120px;color:#f01010">180</div>
<div class="ab d" style="left:206px;top:120px;color:#f01010">134.20</div>
<div class="ab d" style="left:286px;top:120px;color:#f01010">5.22 %</div>
<div class="ab d" style="left:356px;top:120px;color:#c0d0e2">0</div>
<div class="ab d" style="left:426px;top:120px;color:#c0d0e2">2706.30</div>
<div class="ab d" style="left:516px;top:120px;color:#10e070">-190.10</div>
<div class="ab d" style="left:606px;top:120px;color:#10e070">-7.34 %</div>
<div class="ab d" style="left:696px;top:120px;color:#f01010">16.60</div>
<div class="ab d" style="left:786px;top:120px;color:#f01010">0.63 %</div>
<div class="ab d" style="left:6px;top:134px;color:#c0d0e2">2025.10.09</div>
<div class="ab d" style="left:86px;top:134px;color:#f01010">1.82</div>
<div class="ab d" style="left:146px;top:134px;color:#f01010">179</div>
<div class="ab d" style="left:206px;top:134px;color:#f01010">136.00</div>
<div class="ab d" style="left:286px;top:134px;color:#f01010">5.58 %</div>
<div class="ab d" style="left:356px;top:134px;color:#c0d0e2">0</div>
<div class="ab d" style="left:426px;top:134px;color:#c0d0e2">2572.10</div>
<div class="ab d" style="left:516px;top:134px;color:#10e070">-229.30</div>
<div class="ab d" style="left:606px;top:134px;color:#10e070">-9.06 %</div>
<div class="ab d" style="left:696px;top:134px;color:#f01010">11.40</div>
<div class="ab d" style="left:786px;top:134px;color:#f01010">0.47 %</div>
<div class="ab d" style="left:6px;top:148px;color:#c0d0e2">2025.10.08</div>
<div class="ab d" style="left:86px;top:148px;color:#f01010">1.51</div>
<div class="ab d" style="left:146px;top:148px;color:#f01010">149</div>
<div class="ab d" style="left:206px;top:148px;color:#f01010">104.60</div>
<div class="ab d" style="left:286px;top:148px;color:#f01010">4.49 %</div>
<div class="ab d" style="left:356px;top:148px;color:#c0d0e2">0</div>
<div class="ab d" style="left:426px;top:148px;color:#c0d0e2">2436.10</div>
<div class="ab d" style="left:516px;top:148px;color:#10e070">-114.40</div>
<div class="ab d" style="left:606px;top:148px;color:#10e070">-4.70 %</div>
<div class="ab d" style="left:696px;top:148px;color:#f01010">13.20</div>
<div class="ab d" style="left:786px;top:148px;color:#f01010">0.55 %</div>
<div class="ab d" style="left:6px;top:162px;color:#c0d0e2">2025.10.07</div>
<div class="ab d" style="left:86px;top:162px;color:#f01010">1.60</div>
<div class="ab d" style="left:146px;top:162px;color:#f01010">160</div>
<div class="ab d" style="left:206px;top:162px;color:#f01010">107.50</div>
<div class="ab d" style="left:286px;top:162px;color:#f01010">4.83 %</div>
<div class="ab d" style="left:356px;top:162px;color:#c0d0e2">0</div>
<div class="ab d" style="left:426px;top:162px;color:#c0d0e2">2331.50</div>
<div class="ab d" style="left:516px;top:162px;color:#10e070">-93.40</div>
<div class="ab d" style="left:606px;top:162px;color:#10e070">-4.14 %</div>
<div class="ab d" style="left:696px;top:162px;color:#f01010">17.70</div>
<div class="ab d" style="left:786px;top:162px;color:#f01010">0.79 %</div>
<div class="ab d" style="left:6px;top:176px;color:#c0d0e2">2025.10.06</div>
<div class="ab d" style="left:86px;top:176px;color:#f01010">1.63</div>
<div class="ab d" style="left:146px;top:176px;color:#f01010">163</div>
<div class="ab d" style="left:206px;top:176px;color:#f01010">93.00</div>
<div class="ab d" style="left:286px;top:176px;color:#f01010">4.36 %</div>
<div class="ab d" style="left:356px;top:176px;color:#c0d0e2">0</div>
<div class="ab d" style="left:426px;top:176px;color:#c0d0e2">2224.00</div>
<div class="ab d" style="left:516px;top:176px;color:#10e070">-57.80</div>
<div class="ab d" style="left:606px;top:176px;color:#10e070">-2.71 %</div>
<div class="ab d" style="left:696px;top:176px;color:#f01010">13.10</div>
<div class="ab d" style="left:786px;top:176px;color:#f01010">0.60 %</div>
<div class="ab d" style="left:6px;top:190px;color:#c0d0e2">2025.10.05</div>
<div class="ab d" style="left:86px;top:190px;color:#f01010">0.17</div>
<div class="ab d" style="left:146px;top:190px;color:#f01010">17</div>
<div class="ab d" style="left:206px;top:190px;color:#f01010">18.80</div>
<div class="ab d" style="left:286px;top:190px;color:#f01010">0.89 %</div>
<div class="ab d" style="left:356px;top:190px;color:#c0d0e2">0</div>
<div class="ab d" style="left:426px;top:190px;color:#c0d0e2">2131.00</div>
<div class="ab d" style="left:516px;top:190px;color:#10e070">-14.50</div>
<div class="ab d" style="left:606px;top:190px;color:#10e070">-0.69 %</div>
<div class="ab d" style="left:696px;top:190px;color:#f01010">8.30</div>
<div class="ab d" style="left:786px;top:190px;color:#f01010">0.39 %</div>
<div class="ab d" style="left:6px;top:204px;color:#c0d0e2">2025.10.03</div>
<div class="ab d" style="left:86px;top:204px;color:#f01010">1.29</div>
<div class="ab d" style="left:146px;top:204px;color:#f01010">129</div>
<div class="ab d" style="left:206px;top:204px;color:#f01010">77.80</div>
<div class="ab d" style="left:286px;top:204px;color:#f01010">3.82 %</div>
<div class="ab d" style="left:356px;top:204px;color:#c0d0e2">0</div>
<div class="ab d" style="left:426px;top:204px;color:#c0d0e2">2112.20</div>
<div class="ab d" style="left:516px;top:204px;color:#10e070">-74.30</div>
<div class="ab d" style="left:606px;top:204px;color:#10e070">-3.63 %</div>
<div class="ab d" style="left:696px;top:204px;color:#f01010">7.40</div>
<div class="ab d" style="left:786px;top:204px;color:#f01010">0.36 %</div>
<div class="ab d" style="left:6px;top:218px;color:#c0d0e2">2025.10.02</div>
<div class="ab d" style="left:86px;top:218px;color:#f01010">1.37</div>
<div class="ab d" style="left:146px;top:218px;color:#f01010">131</div>
<div class="ab d" style="left:206px;top:218px;color:#f01010">58.60</div>
<div class="ab d" style="left:286px;top:218px;color:#f01010">2.97 %</div>
<div class="ab d" style="left:356px;top:218px;color:#c0d0e2">0</div>
<div class="ab d" style="left:426px;top:218px;color:#c0d0e2">2034.40</div>
<div class="ab d" style="left:516px;top:218px;color:#10e070">-362.70</div>
<div class="ab d" style="left:606px;top:218px;color:#10e070">-17.90 %</div>
<div class="ab d" style="left:696px;top:218px;color:#f01010">29.20</div>
<div class="ab d" style="left:786px;top:218px;color:#f01010">1.48 %</div>
<div class="ab d" style="left:6px;top:232px;color:#c0d0e2">2025.10.01</div>
<div class="ab d" style="left:86px;top:232px;color:#f01010">1.54</div>
<div class="ab d" style="left:146px;top:232px;color:#f01010">151</div>
<div class="ab d" style="left:206px;top:232px;color:#f01010">139.40</div>
<div class="ab d" style="left:286px;top:232px;color:#f01010">7.59 %</div>
<div class="ab d" style="left:356px;top:232px;color:#c0d0e2">0</div>
<div class="ab d" style="left:426px;top:232px;color:#c0d0e2">1975.80</div>
<div class="ab d" style="left:516px;top:232px;color:#10e070">-98.20</div>
<div class="ab d" style="left:606px;top:232px;color:#10e070">-5.24 %</div>
<div class="ab d" style="left:696px;top:232px;color:#f01010">61.00</div>
<div class="ab d" style="left:786px;top:232px;color:#f01010">3.26 %</div>
<div class="ab d" style="left:6px;top:246px;color:#c0d0e2">2025.09.30</div>
<div class="ab d" style="left:86px;top:246px;color:#f01010">1.67</div>
<div class="ab d" style="left:146px;top:246px;color:#f01010">156</div>
<div class="ab d" style="left:206px;top:246px;color:#f01010">97.70</div>
<div class="ab d" style="left:286px;top:246px;color:#f01010">5.62 %</div>
<div class="ab d" style="left:356px;top:246px;color:#c0d0e2">0</div>
<div class="ab d" style="left:426px;top:246px;color:#c0d0e2">1836.40</div>
<div class="ab d" style="left:516px;top:246px;color:#10e070">-273.40</div>
<div class="ab d" style="left:606px;top:246px;color:#10e070">-12.67 %</div>
<div class="ab d" style="left:696px;top:246px;color:#f01010">30.60</div>
<div class="ab d" style="left:786px;top:246px;color:#f01010">1.79 %</div>
<div class="ab d" style="left:6px;top:260px;color:#c0d0e2">2025.09.29</div>
<div class="ab d" style="left:86px;top:260px;color:#f01010">1.52</div>
<div class="ab d" style="left:146px;top:260px;color:#f01010">152</div>
<div class="ab d" style="left:206px;top:260px;color:#f01010">108.80</div>
<div class="ab d" style="left:286px;top:260px;color:#f01010">6.68 %</div>
<div class="ab d" style="left:356px;top:260px;color:#c0d0e2">0</div>
<div class="ab d" style="left:426px;top:260px;color:#c0d0e2">1738.70</div>
<div class="ab d" style="left:516px;top:260px;color:#10e070">-36.30</div>
<div class="ab d" style="left:606px;top:260px;color:#10e070">-2.14 %</div>
<div class="ab d" style="left:696px;top:260px;color:#f01010">10.60</div>
<div class="ab d" style="left:786px;top:260px;color:#f01010">0.65 %</div>
<div class="ab d" style="left:6px;top:274px;color:#c0d0e2">2025.09.28</div>
<div class="ab d" style="left:86px;top:274px;color:#f01010">0.27</div>
<div class="ab d" style="left:146px;top:274px;color:#f01010">21</div>
<div class="ab d" style="left:206px;top:274px;color:#f01010">5.30</div>
<div class="ab d" style="left:286px;top:274px;color:#f01010">0.33 %</div>
<div class="ab d" style="left:356px;top:274px;color:#c0d0e2">0</div>
<div class="ab d" style="left:426px;top:274px;color:#c0d0e2">1629.90</div>
<div class="ab d" style="left:516px;top:274px;color:#10e070">-84.10</div>
<div class="ab d" style="left:606px;top:274px;color:#10e070">-5.18 %</div>
<div class="ab d" style="left:696px;top:274px;color:#f01010">12.40</div>
<div class="ab d" style="left:786px;top:274px;color:#f01010">0.77 %</div>
<div class="ab d" style="left:6px;top:288px;color:#c0d0e2">2025.09.26</div>
<div class="ab d" style="left:86px;top:288px;color:#f01010">1.38</div>
<div class="ab d" style="left:146px;top:288px;color:#f01010">134</div>
<div class="ab d" style="left:206px;top:288px;color:#f01010">65.70</div>
<div class="ab d" style="left:286px;top:288px;color:#f01010">4.21 %</div>
<div class="ab d" style="left:356px;top:288px;color:#c0d0e2">0</div>
<div class="ab d" style="left:426px;top:288px;color:#c0d0e2">1624.60</div>
<div class="ab d" style="left:516px;top:288px;color:#10e070">-159.60</div>
<div class="ab d" style="left:606px;top:288px;color:#10e070">-10.24 %</div>
<div class="ab d" style="left:696px;top:288px;color:#f01010">7.30</div>
<div class="ab d" style="left:786px;top:288px;color:#f01010">0.46 %</div>
<div class="ab d" style="left:6px;top:302px;color:#c0d0e2">2025.09.25</div>
<div class="ab d" style="left:86px;top:302px;color:#f01010">1.27</div>
<div class="ab d" style="left:146px;top:302px;color:#f01010">127</div>
<div class="ab d" style="left:206px;top:302px;color:#f01010">74.60</div>
<div class="ab d" style="left:286px;top:302px;color:#f01010">5.03 %</div>
<div class="ab d" style="left:356px;top:302px;color:#c0d0e2">0</div>
<div class="ab d" style="left:426px;top:302px;color:#c0d0e2">1558.90</div>
<div class="ab d" style="left:516px;top:302px;color:#10e070">-144.10</div>
<div class="ab d" style="left:606px;top:302px;color:#10e070">-9.24 %</div>
<div class="ab d" style="left:696px;top:302px;color:#f01010">19.40</div>
<div class="ab d" style="left:786px;top:302px;color:#f01010">1.30 %</div>
<div class="ab d" style="left:6px;top:316px;color:#c0d0e2">2025.09.24</div>
<div class="ab d" style="left:86px;top:316px;color:#f01010">1.33</div>
<div class="ab d" style="left:146px;top:316px;color:#f01010">125</div>
<div class="ab d" style="left:206px;top:316px;color:#f01010">45.70</div>
<div class="ab d" style="left:286px;top:316px;color:#f01010">3.18 %</div>
<div class="ab d" style="left:356px;top:316px;color:#c0d0e2">0</div>
<div class="ab d" style="left:426px;top:316px;color:#c0d0e2">1484.30</div>
<div class="ab d" style="left:516px;top:316px;color:#10e070">-244.50</div>
<div class="ab d" style="left:606px;top:316px;color:#10e070">-16.22 %</div>
<div class="ab d" style="left:696px;top:316px;color:#f01010">39.50</div>
<div class="ab d" style="left:786px;top:316px;color:#f01010">2.75 %</div>
<div class="ab d" style="left:6px;top:330px;color:#c0d0e2">2025.09.23</div>
<div class="ab d" style="left:86px;top:330px;color:#f01010">1.52</div>
<div class="ab d" style="left:146px;top:330px;color:#f01010">152</div>
<div class="ab d" style="left:206px;top:330px;color:#f01010">95.20</div>
<div class="ab d" style="left:286px;top:330px;color:#f01010">7.09 %</div>
<div class="ab d" style="left:356px;top:330px;color:#c0d0e2">0</div>
<div class="ab d" style="left:426px;top:330px;color:#c0d0e2">1438.60</div>
<div class="ab d" style="left:516px;top:330px;color:#10e070">-40.30</div>
<div class="ab d" style="left:606px;top:330px;color:#10e070">-2.88 %</div>
<div class="ab d" style="left:696px;top:330px;color:#f01010">22.60</div>
<div class="ab d" style="left:786px;top:330px;color:#f01010">1.71 %</div>
<div class="ab d" style="left:6px;top:344px;color:#c0d0e2">2025.09.22</div>
<div class="ab d" style="left:86px;top:344px;color:#f01010">1.21</div>
<div class="ab d" style="left:146px;top:344px;color:#f01010">121</div>
<div class="ab d" style="left:206px;top:344px;color:#f01010">68.10</div>
<div class="ab d" style="left:286px;top:344px;color:#f01010">5.34 %</div>
<div class="ab d" style="left:356px;top:344px;color:#c0d0e2">0</div>
<div class="ab d" style="left:426px;top:344px;color:#c0d0e2">1343.40</div>
<div class="ab d" style="left:516px;top:344px;color:#10e070">-27.80</div>
<div class="ab d" style="left:606px;top:344px;color:#10e070">-2.17 %</div>
<div class="ab d" style="left:696px;top:344px;color:#f01010">11.80</div>
<div class="ab d" style="left:786px;top:344px;color:#f01010">0.91 %</div>
<div class="ab d" style="left:6px;top:358px;color:#c0d0e2">2025.09.21</div>
<div class="ab d" style="left:86px;top:358px;color:#f01010">0.15</div>
<div class="ab d" style="left:146px;top:358px;color:#f01010">15</div>
<div class="ab d" style="left:206px;top:358px;color:#f01010">9.00</div>
<div class="ab d" style="left:286px;top:358px;color:#f01010">0.71 %</div>
<div class="ab d" style="left:356px;top:358px;color:#c0d0e2">0</div>
<div class="ab d" style="left:426px;top:358px;color:#c0d0e2">1275.30</div>
<div class="ab d" style="left:516px;top:358px;color:#10e070">-3.90</div>
<div class="ab d" style="left:606px;top:358px;color:#10e070">-0.31 %</div>
<div class="ab d" style="left:696px;top:358px;color:#f01010">3.60</div>
<div class="ab d" style="left:786px;top:358px;color:#f01010">0.28 %</div>
<div class="ab d" style="left:6px;top:372px;color:#c0d0e2">2025.09.19</div>
<div class="ab d" style="left:86px;top:372px;color:#f01010">1.15</div>
<div class="ab d" style="left:146px;top:372px;color:#f01010">114</div>
<div class="ab d" style="left:206px;top:372px;color:#f01010">59.80</div>
<div class="ab d" style="left:286px;top:372px;color:#f01010">4.96 %</div>
<div class="ab d" style="left:356px;top:372px;color:#c0d0e2">0</div>
<div class="ab d" style="left:426px;top:372px;color:#c0d0e2">1266.30</div>
<div class="ab d" style="left:516px;top:372px;color:#10e070">-93.10</div>
<div class="ab d" style="left:606px;top:372px;color:#10e070">-7.58 %</div>
<div class="ab d" style="left:696px;top:372px;color:#f01010">31.20</div>
<div class="ab d" style="left:786px;top:372px;color:#f01010">2.65 %</div>
<div class="ab d" style="left:6px;top:386px;color:#c0d0e2">2025.09.18</div>
<div class="ab d" style="left:86px;top:386px;color:#f01010">0.82</div>
<div class="ab d" style="left:146px;top:386px;color:#f01010">75</div>
<div class="ab d" style="left:206px;top:386px;color:#f01010">30.90</div>
<div class="ab d" style="left:286px;top:386px;color:#f01010">2.63 %</div>
<div class="ab d" style="left:356px;top:386px;color:#c0d0e2">0</div>
<div class="ab d" style="left:426px;top:386px;color:#c0d0e2">1206.50</div>
<div class="ab d" style="left:516px;top:386px;color:#10e070">-126.70</div>
<div class="ab d" style="left:606px;top:386px;color:#10e070">-10.55 %</div>
<div class="ab d" style="left:696px;top:386px;color:#f01010">34.50</div>
<div class="ab d" style="left:786px;top:386px;color:#f01010">2.97 %</div>
<div class="ab d" style="left:6px;top:400px;color:#c0d0e2">2025.09.17</div>
<div class="ab d" style="left:86px;top:400px;color:#f01010">0.72</div>
<div class="ab d" style="left:146px;top:400px;color:#f01010">69</div>
<div class="ab d" style="left:206px;top:400px;color:#f01010">23.80</div>
<div class="ab d" style="left:286px;top:400px;color:#f01010">2.07 %</div>
<div class="ab d" style="left:356px;top:400px;color:#c0d0e2">0</div>
<div class="ab d" style="left:426px;top:400px;color:#c0d0e2">1175.60</div>
<div class="ab d" style="left:516px;top:400px;color:#10e070">-168.60</div>
<div class="ab d" style="left:606px;top:400px;color:#10e070">-14.52 %</div>
<div class="ab d" style="left:696px;top:400px;color:#f01010">17.10</div>
<div class="ab d" style="left:786px;top:400px;color:#f01010">1.49 %</div>
<div class="ab d" style="left:6px;top:414px;color:#c0d0e2">2025.09.16</div>
<div class="ab d" style="left:86px;top:414px;color:#f01010">1.14</div>
<div class="ab d" style="left:146px;top:414px;color:#f01010">114</div>
<div class="ab d" style="left:206px;top:414px;color:#f01010">65.80</div>
<div class="ab d" style="left:286px;top:414px;color:#f01010">6.06 %</div>
<div class="ab d" style="left:356px;top:414px;color:#c0d0e2">0</div>
<div class="ab d" style="left:426px;top:414px;color:#c0d0e2">1151.80</div>
<div class="ab d" style="left:516px;top:414px;color:#10e070">-30.80</div>
<div class="ab d" style="left:606px;top:414px;color:#10e070">-2.70 %</div>
<div class="ab d" style="left:696px;top:414px;color:#f01010">39.40</div>
<div class="ab d" style="left:786px;top:414px;color:#f01010">3.75 %</div>
<div class="ab d" style="left:6px;top:428px;color:#c0d0e2">2025.09.15</div>
<div class="ab d" style="left:86px;top:428px;color:#f01010">1.10</div>
<div class="ab d" style="left:146px;top:428px;color:#f01010">110</div>
<div class="ab d" style="left:206px;top:428px;color:#f01010">59.00</div>
<div class="ab d" style="left:286px;top:428px;color:#f01010">5.74 %</div>
<div class="ab d" style="left:356px;top:428px;color:#c0d0e2">0</div>
<div class="ab d" style="left:426px;top:428px;color:#c0d0e2">1086.00</div>
<div class="ab d" style="left:516px;top:428px;color:#10e070">-32.10</div>
<div class="ab d" style="left:606px;top:428px;color:#10e070">-3.08 %</div>
<div class="ab d" style="left:696px;top:428px;color:#f01010">29.10</div>
<div class="ab d" style="left:786px;top:428px;color:#f01010">2.84 %</div>
<div class="ab d" style="left:6px;top:442px;color:#c0d0e2">2025.09.14</div>
<div class="ab d" style="left:86px;top:442px;color:#f01010">0.12</div>
<div class="ab d" style="left:146px;top:442px;color:#f01010">12</div>
<div class="ab d" style="left:206px;top:442px;color:#f01010">4.80</div>
<div class="ab d" style="left:286px;top:442px;color:#f01010">0.47 %</div>
<div class="ab d" style="left:356px;top:442px;color:#c0d0e2">0</div>
<div class="ab d" style="left:426px;top:442px;color:#c0d0e2">1027.00</div>
<div class="ab d" style="left:516px;top:442px;color:#10e070">-7.60</div>
<div class="ab d" style="left:606px;top:442px;color:#10e070">-0.74 %</div>
<div class="ab d" style="left:696px;top:442px;color:#f01010">2.40</div>
<div class="ab d" style="left:786px;top:442px;color:#f01010">0.23 %</div>
<div class="ab d" style="left:6px;top:456px;color:#c0d0e2">2025.09.12</div>
<div class="ab d" style="left:86px;top:456px;color:#f01010">0.77</div>
<div class="ab d" style="left:146px;top:456px;color:#f01010">74</div>
<div class="ab d" style="left:206px;top:456px;color:#f01010">22.20</div>
<div class="ab d" style="left:286px;top:456px;color:#f01010">2.22 %</div>
<div class="ab d" style="left:356px;top:456px;color:#f01010">1000</div>
<div class="ab d" style="left:426px;top:456px;color:#c0d0e2">1022.20</div>
<div class="ab d" style="left:516px;top:456px;color:#10e070">-160.90</div>
<div class="ab d" style="left:606px;top:456px;color:#10e070">-16.01 %</div>
<div class="ab d" style="left:696px;top:456px;color:#f01010">11.10</div>
<div class="ab d" style="left:786px;top:456px;color:#f01010">1.10 %</div>
<div class="ab" style="left:0;top:470px;width:100%;height:18px;background:#1c1c1c"></div>
<div class="ab" style="left:36px;top:471px;font-size:14px;line-height:16px;color:#c0d0e2;letter-spacing:1.5px">合计</div>
<div class="ab d" style="left:86px;top:472px;color:#f01010">32.82</div>
<div class="ab d" style="left:206px;top:472px;color:#f01010">1976.50</div>
<div class="ab d" style="left:286px;top:472px;color:#f01010">197.65 %</div>
<div class="ab d" style="left:356px;top:472px;color:#f01010">1000</div>
<div class="ab d" style="left:516px;top:472px;color:#10e070">-362.70</div>
<div class="ab d" style="left:606px;top:472px;color:#10e070">-17.90 %</div>
<div class="ab d" style="left:696px;top:472px;color:#f01010">61.00</div>
<div class="ab d" style="left:786px;top:472px;color:#f01010">3.75 %</div>
</div>
<div class="ab" style="left:604px;top:0;width:1px;height:489px;background:#8796a8"></div>
<div class="ab" style="left:1494px;top:0;width:1px;height:489px;background:#8796a8"></div>
<div class="ab" style="left:604px;top:488px;width:891px;height:1px;background:#8796a8"></div>
<div class="ab" style="left:475px;top:0;width:129px;height:180px;overflow:hidden">
<div class="ab" style="left:11px;top:11px;font-size:15.5px;line-height:20px;color:#fff"><span style="letter-spacing:2.7px">净值</span>: 2978.40</div>
<div class="ab" style="left:11px;top:30.5px;font-size:15.5px;line-height:20px;color:#fff"><span style="letter-spacing:2.7px">可用保证金</span>: 2978.40</div>
<div class="ab" style="left:11px;top:50.5px;font-size:15.5px;line-height:20px;color:#ff0000"><span style="letter-spacing:2.7px">多单</span>: 3<span style="letter-spacing:2.7px">单</span> 0.03<span style="letter-spacing:2.7px">手</span></div>
<div class="ab" style="left:11px;top:70px;font-size:15.5px;line-height:20px;color:#00ff00"><span style="letter-spacing:2.7px">空单</span>: 1<span style="letter-spacing:2.7px">单</span> 0.01<span style="letter-spacing:2.7px">手</span></div>
<div class="ab" style="left:11px;top:90px;font-size:15.5px;line-height:20px;color:#ff0000"><span style="letter-spacing:2.7px">总盈亏</span>: -6.60</div>
<div class="ab" style="left:11px;top:111px;font-size:15.5px;line-height:20px;color:#fff"><span style="letter-spacing:2.7px">点差</span>: 15<span style="letter-spacing:2.7px">点</span></div>
<div class="ab" style="left:11px;top:130.5px;font-size:15.5px;line-height:20px;color:#fff"><span style="letter-spacing:2.7px">距上次开仓</span>: 34</div>
<div class="ab" style="left:11px;top:150.5px;font-size:15.5px;line-height:20px;color:#00ff00"><span style="letter-spacing:2.7px">状态</span>: <span style="letter-spacing:2.7px">正常运行</span></div>
<div class="ab" style="left:7px;top:100px;font-size:12px;line-height:13px;color:#fff;letter-spacing:0.2px">BUY 0.01 at 4179.365</div>
<div class="ab" style="left:7px;top:3px;font-size:12px;line-height:13px;color:#fff">BUY 0.01 at 4185.345</div>
<div class="ab" style="left:12px;top:1px;font-size:12px;line-height:13px;color:#fff;opacity:0.8">SELL 0.01 at 4184.545</div>
<div class="ab" style="left:60px;top:-7px;font-size:15.5px;line-height:16px;color:#fff">2985.00</div>
<div class="ab" style="left:5px;top:0;width:10px;height:2px;background:#e05050"></div><div class="ab" style="left:15px;top:0;width:9px;height:2px;background:#4080c0"></div><div class="ab" style="left:32px;top:0;width:9px;height:2px;background:#e05050"></div><div class="ab" style="left:43px;top:0;width:9px;height:2px;background:#4080c0"></div>
<div class="ab" style="left:113px;top:15px;width:16px;height:14px;background:#2a3038;border:1px solid #8898b0;color:#ccc;font-size:11px;line-height:12px;text-align:center">移</div>
<div class="ab" style="left:113px;top:37px;width:16px;height:14px;background:#2a3038;border-radius:2px;color:#ccc;font-size:11px;line-height:14px;text-align:center">√</div>
</div>
<div class="ab" style="left:472px;top:558px;width:1428px;height:28px;background:#f0f0f0"></div>
<div class="ab" style="left:472px;top:557px;width:1px;height:26px;background:#a0a0a0"></div>
<div class="ab" style="left:476px;top:557px;width:128px;height:24px;background:#fff;border:1px solid #000;border-top:none;box-shadow:1px 1px 0 #a8a8a8"></div>
<div class="ab t15" style="left:476px;width:128px;top:561px;text-align:center"><span class="L">XAUUSDc,M1</span></div>
<div class="ab t15" style="left:619px;top:561px;color:#808080"><span class="L">XAUUSDc,H1</span></div>
<div class="ab" style="left:730px;top:561px;width:1px;height:18px;background:#909090"></div>
<div class="ab t15" style="left:744px;top:561px;color:#808080"><span class="L">XAUUSDc,H1</span></div>
<svg class="ab" style="left:1860px;top:564px" width="40" height="12"><path d="M7 2 L3 6 L7 10 Z" fill="#b0b0b0"/><path d="M32 2 L36 6 L32 10 Z" fill="#b0b0b0"/></svg>
<div class="ab" style="left:6px;top:587px;width:1890px;height:1px;background:#c8c8c8"></div>
<div class="ab" style="left:6px;top:588px;width:25px;height:247px;background:#bccbdc"></div>
<svg class="ab" style="left:13px;top:594px" width="12" height="12"><path d="M1.5 1.5 L10.5 10.5 M10.5 1.5 L1.5 10.5" stroke="#000" stroke-width="2"/></svg>
<div class="ab" style="left:33px;top:588px;width:1854px;height:225px;background:#fff"></div>
<div class="ab" style="left:200px;top:588px;width:1px;height:225px;background:#d0d0d0"></div>
<div class="ab" style="left:200px;top:588px;width:1px;height:25px;background:#a8a8a8"></div>
<div class="ab" style="left:314px;top:588px;width:1px;height:225px;background:#d0d0d0"></div>
<div class="ab" style="left:314px;top:588px;width:1px;height:25px;background:#a8a8a8"></div>
<div class="ab" style="left:404px;top:588px;width:1px;height:225px;background:#d0d0d0"></div>
<div class="ab" style="left:404px;top:588px;width:1px;height:25px;background:#a8a8a8"></div>
<div class="ab" style="left:481px;top:588px;width:1px;height:225px;background:#d0d0d0"></div>
<div class="ab" style="left:481px;top:588px;width:1px;height:25px;background:#a8a8a8"></div>
<div class="ab" style="left:609px;top:588px;width:1px;height:225px;background:#d0d0d0"></div>
<div class="ab" style="left:609px;top:588px;width:1px;height:25px;background:#a8a8a8"></div>
<div class="ab" style="left:737px;top:588px;width:1px;height:225px;background:#d0d0d0"></div>
<div class="ab" style="left:737px;top:588px;width:1px;height:25px;background:#a8a8a8"></div>
<div class="ab" style="left:865px;top:588px;width:1px;height:225px;background:#d0d0d0"></div>
<div class="ab" style="left:865px;top:588px;width:1px;height:25px;background:#a8a8a8"></div>
<div class="ab" style="left:993px;top:588px;width:1px;height:225px;background:#d0d0d0"></div>
<div class="ab" style="left:993px;top:588px;width:1px;height:25px;background:#a8a8a8"></div>
<div class="ab" style="left:1168px;top:588px;width:1px;height:225px;background:#d0d0d0"></div>
<div class="ab" style="left:1168px;top:588px;width:1px;height:25px;background:#a8a8a8"></div>
<div class="ab" style="left:1296px;top:588px;width:1px;height:225px;background:#d0d0d0"></div>
<div class="ab" style="left:1296px;top:588px;width:1px;height:25px;background:#a8a8a8"></div>
<div class="ab" style="left:1437px;top:588px;width:1px;height:225px;background:#d0d0d0"></div>
<div class="ab" style="left:1437px;top:588px;width:1px;height:25px;background:#a8a8a8"></div>
<div class="ab" style="left:1562px;top:588px;width:1px;height:225px;background:#d0d0d0"></div>
<div class="ab" style="left:1562px;top:588px;width:1px;height:25px;background:#a8a8a8"></div>
<div class="ab" style="left:33px;top:613px;width:1854px;height:1px;background:#e0e0e0"></div>
<svg class="ab" style="left:1145px;top:598px" width="10" height="5"><path d="M0 5 L5 0 L10 5 Z" fill="#000"/></svg>
<div class="ab t15" style="left:41px;top:593px">时间</div>
<div class="ab t15 r" style="left:200px;width:107px;top:593px">交易品种</div>
<div class="ab t15 r" style="left:314px;width:83px;top:593px">订单号</div>
<div class="ab t15 r" style="left:404px;width:70px;top:593px">类型</div>
<div class="ab t15 r" style="left:481px;width:121px;top:593px">交易量</div>
<div class="ab t15 r" style="left:609px;width:121px;top:593px">价位</div>
<div class="ab t15 r" style="left:737px;width:121px;top:593px">止损</div>
<div class="ab t15 r" style="left:865px;width:121px;top:593px">止盈</div>
<div class="ab t15 r" style="left:993px;width:140px;top:593px">时间</div>
<div class="ab t15 r" style="left:1168px;width:121px;top:593px">价位</div>
<div class="ab t15 r" style="left:1296px;width:134px;top:593px">盈利</div>
<div class="ab t15 r" style="left:1437px;width:118px;top:593px">变更</div>
<div class="ab t15 r" style="left:1562px;width:318px;top:593px">注释</div>
<div class="ab" style="left:33px;top:614px;width:1854px;height:24px;background:#ebebeb"></div>
<div class="ab" style="left:33px;top:638px;width:1854px;height:1px;background:#d4d4d4"></div>
<div class="ab" style="left:200px;top:614px;width:1px;height:25px;background:#d0d0d0"></div>
<div class="ab" style="left:314px;top:614px;width:1px;height:25px;background:#d0d0d0"></div>
<div class="ab" style="left:404px;top:614px;width:1px;height:25px;background:#d0d0d0"></div>
<div class="ab" style="left:481px;top:614px;width:1px;height:25px;background:#d0d0d0"></div>
<div class="ab" style="left:609px;top:614px;width:1px;height:25px;background:#d0d0d0"></div>
<div class="ab" style="left:737px;top:614px;width:1px;height:25px;background:#d0d0d0"></div>
<div class="ab" style="left:865px;top:614px;width:1px;height:25px;background:#d0d0d0"></div>
<div class="ab" style="left:993px;top:614px;width:1px;height:25px;background:#d0d0d0"></div>
<div class="ab" style="left:1168px;top:614px;width:1px;height:25px;background:#d0d0d0"></div>
<div class="ab" style="left:1296px;top:614px;width:1px;height:25px;background:#d0d0d0"></div>
<div class="ab" style="left:1437px;top:614px;width:1px;height:25px;background:#d0d0d0"></div>
<div class="ab" style="left:1562px;top:614px;width:1px;height:25px;background:#d0d0d0"></div>
<svg class="ab" style="left:38px;top:617px" width="14" height="19"><rect x="0.8" y="0.8" width="12.4" height="17.4" rx="2.5" fill="#fff" stroke="#e03c3c" stroke-width="1.4"/><path d="M5.5 5 H8.5 M5.5 8 H8.5" stroke="#e03c3c" stroke-width="1.3"/></svg>
<div class="ab t15" style="left:60px;top:617px"><span class="L">2025.10.15 00:4...</span></div>
<div class="ab t15 r" style="left:200px;width:110px;top:617px"><span class="L">xauusdc</span></div>
<div class="ab t15 r" style="left:314px;width:86px;top:617px"><span class="L">677094757</span></div>
<div class="ab t15 r" style="left:404px;width:73px;top:617px"><span class="L">sell</span></div>
<div class="ab t15 r" style="left:481px;width:124px;top:617px"><span class="L">0.01</span></div>
<div class="ab t15 r" style="left:609px;width:124px;top:617px"><span class="L">4163.776</span></div>
<div class="ab t15 r" style="left:993px;width:171px;top:617px"><span class="L">2025.10.15 01:02:19</span></div>
<div class="ab t15 r" style="left:1168px;width:124px;top:617px"><span class="L">4163.674</span></div>
<div class="ab t15 r" style="left:1296px;width:137px;top:617px;color:#000"><span class="L">0.00</span></div>
<div class="ab t15 r" style="left:1437px;width:121px;top:617px;color:#000"><span class="L">0.00 %</span></div>
<div class="ab t15 r" style="left:1562px;width:320px;top:617px"><span class="L">qv2026904767</span></div>
<div class="ab" style="left:33px;top:639px;width:1854px;height:24px;background:#fff"></div>
<div class="ab" style="left:33px;top:663px;width:1854px;height:1px;background:#d4d4d4"></div>
<div class="ab" style="left:200px;top:639px;width:1px;height:25px;background:#d0d0d0"></div>
<div class="ab" style="left:314px;top:639px;width:1px;height:25px;background:#d0d0d0"></div>
<div class="ab" style="left:404px;top:639px;width:1px;height:25px;background:#d0d0d0"></div>
<div class="ab" style="left:481px;top:639px;width:1px;height:25px;background:#d0d0d0"></div>
<div class="ab" style="left:609px;top:639px;width:1px;height:25px;background:#d0d0d0"></div>
<div class="ab" style="left:737px;top:639px;width:1px;height:25px;background:#d0d0d0"></div>
<div class="ab" style="left:865px;top:639px;width:1px;height:25px;background:#d0d0d0"></div>
<div class="ab" style="left:993px;top:639px;width:1px;height:25px;background:#d0d0d0"></div>
<div class="ab" style="left:1168px;top:639px;width:1px;height:25px;background:#d0d0d0"></div>
<div class="ab" style="left:1296px;top:639px;width:1px;height:25px;background:#d0d0d0"></div>
<div class="ab" style="left:1437px;top:639px;width:1px;height:25px;background:#d0d0d0"></div>
<div class="ab" style="left:1562px;top:639px;width:1px;height:25px;background:#d0d0d0"></div>
<svg class="ab" style="left:38px;top:642px" width="14" height="19"><rect x="0.8" y="0.8" width="12.4" height="17.4" rx="2.5" fill="#fff" stroke="#1f6fb8" stroke-width="1.4"/><path d="M5.5 5 H8.5 M5.5 8 H8.5" stroke="#1f6fb8" stroke-width="1.3"/></svg>
<div class="ab t15" style="left:60px;top:642px"><span class="L">2025.10.15 01:0...</span></div>
<div class="ab t15 r" style="left:200px;width:110px;top:642px"><span class="L">xauusdc</span></div>
<div class="ab t15 r" style="left:314px;width:86px;top:642px"><span class="L">677212908</span></div>
<div class="ab t15 r" style="left:404px;width:73px;top:642px"><span class="L">buy</span></div>
<div class="ab t15 r" style="left:481px;width:124px;top:642px"><span class="L">0.01</span></div>
<div class="ab t15 r" style="left:609px;width:124px;top:642px"><span class="L">4163.674</span></div>
<div class="ab t15 r" style="left:993px;width:171px;top:642px"><span class="L">2025.10.15 01:02:19</span></div>
<div class="ab t15 r" style="left:1168px;width:124px;top:642px"><span class="L">4163.776</span></div>
<div class="ab t15 r" style="left:1296px;width:137px;top:642px;color:#1a1ae0"><span class="L">0.10</span></div>
<div class="ab t15 r" style="left:1437px;width:121px;top:642px;color:#1a1ae0"><span class="L">0.00 %</span></div>
<div class="ab t15 r" style="left:1562px;width:320px;top:642px"><span class="L">qv2026904767</span></div>
<div class="ab" style="left:33px;top:664px;width:1854px;height:24px;background:#ebebeb"></div>
<div class="ab" style="left:33px;top:688px;width:1854px;height:1px;background:#d4d4d4"></div>
<div class="ab" style="left:200px;top:664px;width:1px;height:25px;background:#d0d0d0"></div>
<div class="ab" style="left:314px;top:664px;width:1px;height:25px;background:#d0d0d0"></div>
<div class="ab" style="left:404px;top:664px;width:1px;height:25px;background:#d0d0d0"></div>
<div class="ab" style="left:481px;top:664px;width:1px;height:25px;background:#d0d0d0"></div>
<div class="ab" style="left:609px;top:664px;width:1px;height:25px;background:#d0d0d0"></div>
<div class="ab" style="left:737px;top:664px;width:1px;height:25px;background:#d0d0d0"></div>
<div class="ab" style="left:865px;top:664px;width:1px;height:25px;background:#d0d0d0"></div>
<div class="ab" style="left:993px;top:664px;width:1px;height:25px;background:#d0d0d0"></div>
<div class="ab" style="left:1168px;top:664px;width:1px;height:25px;background:#d0d0d0"></div>
<div class="ab" style="left:1296px;top:664px;width:1px;height:25px;background:#d0d0d0"></div>
<div class="ab" style="left:1437px;top:664px;width:1px;height:25px;background:#d0d0d0"></div>
<div class="ab" style="left:1562px;top:664px;width:1px;height:25px;background:#d0d0d0"></div>
<svg class="ab" style="left:38px;top:667px" width="14" height="19"><rect x="0.8" y="0.8" width="12.4" height="17.4" rx="2.5" fill="#fff" stroke="#1f6fb8" stroke-width="1.4"/><path d="M5.5 5 H8.5 M5.5 8 H8.5" stroke="#1f6fb8" stroke-width="1.3"/></svg>
<div class="ab t15" style="left:60px;top:667px"><span class="L">2025.10.15 00:4...</span></div>
<div class="ab t15 r" style="left:200px;width:110px;top:667px"><span class="L">xauusdc</span></div>
<div class="ab t15 r" style="left:314px;width:86px;top:667px"><span class="L">677142871</span></div>
<div class="ab t15 r" style="left:404px;width:73px;top:667px"><span class="L">buy</span></div>
<div class="ab t15 r" style="left:481px;width:124px;top:667px"><span class="L">0.01</span></div>
<div class="ab t15 r" style="left:609px;width:124px;top:667px"><span class="L">4167.824</span></div>
<div class="ab t15 r" style="left:993px;width:171px;top:667px"><span class="L">2025.10.15 01:02:19</span></div>
<div class="ab t15 r" style="left:1168px;width:124px;top:667px"><span class="L">4167.913</span></div>
<div class="ab t15 r" style="left:1296px;width:137px;top:667px;color:#1a1ae0"><span class="L">0.10</span></div>
<div class="ab t15 r" style="left:1437px;width:121px;top:667px;color:#1a1ae0"><span class="L">0.00 %</span></div>
<div class="ab t15 r" style="left:1562px;width:320px;top:667px"><span class="L">qv2026904767</span></div>
<div class="ab" style="left:33px;top:689px;width:1854px;height:24px;background:#fff"></div>
<div class="ab" style="left:33px;top:713px;width:1854px;height:1px;background:#d4d4d4"></div>
<div class="ab" style="left:200px;top:689px;width:1px;height:25px;background:#d0d0d0"></div>
<div class="ab" style="left:314px;top:689px;width:1px;height:25px;background:#d0d0d0"></div>
<div class="ab" style="left:404px;top:689px;width:1px;height:25px;background:#d0d0d0"></div>
<div class="ab" style="left:481px;top:689px;width:1px;height:25px;background:#d0d0d0"></div>
<div class="ab" style="left:609px;top:689px;width:1px;height:25px;background:#d0d0d0"></div>
<div class="ab" style="left:737px;top:689px;width:1px;height:25px;background:#d0d0d0"></div>
<div class="ab" style="left:865px;top:689px;width:1px;height:25px;background:#d0d0d0"></div>
<div class="ab" style="left:993px;top:689px;width:1px;height:25px;background:#d0d0d0"></div>
<div class="ab" style="left:1168px;top:689px;width:1px;height:25px;background:#d0d0d0"></div>
<div class="ab" style="left:1296px;top:689px;width:1px;height:25px;background:#d0d0d0"></div>
<div class="ab" style="left:1437px;top:689px;width:1px;height:25px;background:#d0d0d0"></div>
<div class="ab" style="left:1562px;top:689px;width:1px;height:25px;background:#d0d0d0"></div>
<svg class="ab" style="left:38px;top:692px" width="14" height="19"><rect x="0.8" y="0.8" width="12.4" height="17.4" rx="2.5" fill="#fff" stroke="#1f6fb8" stroke-width="1.4"/><path d="M5.5 5 H8.5 M5.5 8 H8.5" stroke="#1f6fb8" stroke-width="1.3"/></svg>
<div class="ab t15" style="left:60px;top:692px"><span class="L">2025.10.15 00:4...</span></div>
<div class="ab t15 r" style="left:200px;width:110px;top:692px"><span class="L">xauusdc</span></div>
<div class="ab t15 r" style="left:314px;width:86px;top:692px"><span class="L">677094591</span></div>
<div class="ab t15 r" style="left:404px;width:73px;top:692px"><span class="L">buy</span></div>
<div class="ab t15 r" style="left:481px;width:124px;top:692px"><span class="L">0.01</span></div>
<div class="ab t15 r" style="left:609px;width:124px;top:692px"><span class="L">4165.713</span></div>
<div class="ab t15 r" style="left:993px;width:171px;top:692px"><span class="L">2025.10.15 01:02:19</span></div>
<div class="ab t15 r" style="left:1168px;width:124px;top:692px"><span class="L">4167.618</span></div>
<div class="ab t15 r" style="left:1296px;width:137px;top:692px;color:#1a1ae0"><span class="L">1.90</span></div>
<div class="ab t15 r" style="left:1437px;width:121px;top:692px;color:#1a1ae0"><span class="L">0.05 %</span></div>
<div class="ab t15 r" style="left:1562px;width:320px;top:692px"><span class="L">qv2026904767</span></div>
<div class="ab" style="left:33px;top:714px;width:1854px;height:24px;background:#ebebeb"></div>
<div class="ab" style="left:33px;top:738px;width:1854px;height:1px;background:#d4d4d4"></div>
<div class="ab" style="left:200px;top:714px;width:1px;height:25px;background:#d0d0d0"></div>
<div class="ab" style="left:314px;top:714px;width:1px;height:25px;background:#d0d0d0"></div>
<div class="ab" style="left:404px;top:714px;width:1px;height:25px;background:#d0d0d0"></div>
<div class="ab" style="left:481px;top:714px;width:1px;height:25px;background:#d0d0d0"></div>
<div class="ab" style="left:609px;top:714px;width:1px;height:25px;background:#d0d0d0"></div>
<div class="ab" style="left:737px;top:714px;width:1px;height:25px;background:#d0d0d0"></div>
<div class="ab" style="left:865px;top:714px;width:1px;height:25px;background:#d0d0d0"></div>
<div class="ab" style="left:993px;top:714px;width:1px;height:25px;background:#d0d0d0"></div>
<div class="ab" style="left:1168px;top:714px;width:1px;height:25px;background:#d0d0d0"></div>
<div class="ab" style="left:1296px;top:714px;width:1px;height:25px;background:#d0d0d0"></div>
<div class="ab" style="left:1437px;top:714px;width:1px;height:25px;background:#d0d0d0"></div>
<div class="ab" style="left:1562px;top:714px;width:1px;height:25px;background:#d0d0d0"></div>
<svg class="ab" style="left:38px;top:717px" width="14" height="19"><rect x="0.8" y="0.8" width="12.4" height="17.4" rx="2.5" fill="#fff" stroke="#1f6fb8" stroke-width="1.4"/><path d="M5.5 5 H8.5 M5.5 8 H8.5" stroke="#1f6fb8" stroke-width="1.3"/></svg>
<div class="ab t15" style="left:60px;top:717px"><span class="L">2025.10.15 01:0...</span></div>
<div class="ab t15 r" style="left:200px;width:110px;top:717px"><span class="L">xauusdc</span></div>
<div class="ab t15 r" style="left:314px;width:86px;top:717px"><span class="L">677361811</span></div>
<div class="ab t15 r" style="left:404px;width:73px;top:717px"><span class="L">buy</span></div>
<div class="ab t15 r" style="left:481px;width:124px;top:717px"><span class="L">0.01</span></div>
<div class="ab t15 r" style="left:609px;width:124px;top:717px"><span class="L">4175.677</span></div>
<div class="ab t15 r" style="left:993px;width:171px;top:717px"><span class="L">2025.10.15 01:05:53</span></div>
<div class="ab t15 r" style="left:1168px;width:124px;top:717px"><span class="L">4177.784</span></div>
<div class="ab t15 r" style="left:1296px;width:137px;top:717px;color:#1a1ae0"><span class="L">2.10</span></div>
<div class="ab t15 r" style="left:1437px;width:121px;top:717px;color:#1a1ae0"><span class="L">0.05 %</span></div>
<div class="ab t15 r" style="left:1562px;width:320px;top:717px"><span class="L">qv2026904767</span></div>
<div class="ab" style="left:33px;top:739px;width:1854px;height:24px;background:#fff"></div>
<div class="ab" style="left:33px;top:763px;width:1854px;height:1px;background:#d4d4d4"></div>
<div class="ab" style="left:200px;top:739px;width:1px;height:25px;background:#d0d0d0"></div>
<div class="ab" style="left:314px;top:739px;width:1px;height:25px;background:#d0d0d0"></div>
<div class="ab" style="left:404px;top:739px;width:1px;height:25px;background:#d0d0d0"></div>
<div class="ab" style="left:481px;top:739px;width:1px;height:25px;background:#d0d0d0"></div>
<div class="ab" style="left:609px;top:739px;width:1px;height:25px;background:#d0d0d0"></div>
<div class="ab" style="left:737px;top:739px;width:1px;height:25px;background:#d0d0d0"></div>
<div class="ab" style="left:865px;top:739px;width:1px;height:25px;background:#d0d0d0"></div>
<div class="ab" style="left:993px;top:739px;width:1px;height:25px;background:#d0d0d0"></div>
<div class="ab" style="left:1168px;top:739px;width:1px;height:25px;background:#d0d0d0"></div>
<div class="ab" style="left:1296px;top:739px;width:1px;height:25px;background:#d0d0d0"></div>
<div class="ab" style="left:1437px;top:739px;width:1px;height:25px;background:#d0d0d0"></div>
<div class="ab" style="left:1562px;top:739px;width:1px;height:25px;background:#d0d0d0"></div>
<svg class="ab" style="left:38px;top:742px" width="14" height="19"><rect x="0.8" y="0.8" width="12.4" height="17.4" rx="2.5" fill="#fff" stroke="#e03c3c" stroke-width="1.4"/><path d="M5.5 5 H8.5 M5.5 8 H8.5" stroke="#e03c3c" stroke-width="1.3"/></svg>
<div class="ab t15" style="left:60px;top:742px"><span class="L">2025.10.15 01:1...</span></div>
<div class="ab t15 r" style="left:200px;width:110px;top:742px"><span class="L">xauusdc</span></div>
<div class="ab t15 r" style="left:314px;width:86px;top:742px"><span class="L">677456717</span></div>
<div class="ab t15 r" style="left:404px;width:73px;top:742px"><span class="L">sell</span></div>
<div class="ab t15 r" style="left:481px;width:124px;top:742px"><span class="L">0.01</span></div>
<div class="ab t15 r" style="left:609px;width:124px;top:742px"><span class="L">4178.684</span></div>
<div class="ab t15 r" style="left:993px;width:171px;top:742px"><span class="L">2025.10.15 01:25:58</span></div>
<div class="ab t15 r" style="left:1168px;width:124px;top:742px"><span class="L">4182.446</span></div>
<div class="ab t15 r" style="left:1296px;width:137px;top:742px;color:#000"><span class="L">0.00</span></div>
<div class="ab t15 r" style="left:1437px;width:121px;top:742px;color:#000"><span class="L">-0.09 %</span></div>
<div class="ab t15 r" style="left:1562px;width:320px;top:742px"><span class="L">qv2026904767</span></div>
<div class="ab" style="left:33px;top:764px;width:1854px;height:24px;background:#ebebeb"></div>
<div class="ab" style="left:33px;top:788px;width:1854px;height:1px;background:#d4d4d4"></div>
<div class="ab" style="left:200px;top:764px;width:1px;height:25px;background:#d0d0d0"></div>
<div class="ab" style="left:314px;top:764px;width:1px;height:25px;background:#d0d0d0"></div>
<div class="ab" style="left:404px;top:764px;width:1px;height:25px;background:#d0d0d0"></div>
<div class="ab" style="left:481px;top:764px;width:1px;height:25px;background:#d0d0d0"></div>
<div class="ab" style="left:609px;top:764px;width:1px;height:25px;background:#d0d0d0"></div>
<div class="ab" style="left:737px;top:764px;width:1px;height:25px;background:#d0d0d0"></div>
<div class="ab" style="left:865px;top:764px;width:1px;height:25px;background:#d0d0d0"></div>
<div class="ab" style="left:993px;top:764px;width:1px;height:25px;background:#d0d0d0"></div>
<div class="ab" style="left:1168px;top:764px;width:1px;height:25px;background:#d0d0d0"></div>
<div class="ab" style="left:1296px;top:764px;width:1px;height:25px;background:#d0d0d0"></div>
<div class="ab" style="left:1437px;top:764px;width:1px;height:25px;background:#d0d0d0"></div>
<div class="ab" style="left:1562px;top:764px;width:1px;height:25px;background:#d0d0d0"></div>
<svg class="ab" style="left:38px;top:767px" width="14" height="19"><rect x="0.8" y="0.8" width="12.4" height="17.4" rx="2.5" fill="#fff" stroke="#1f6fb8" stroke-width="1.4"/><path d="M5.5 5 H8.5 M5.5 8 H8.5" stroke="#1f6fb8" stroke-width="1.3"/></svg>
<div class="ab t15" style="left:60px;top:767px"><span class="L">2025.10.15 01:1...</span></div>
<div class="ab t15 r" style="left:200px;width:110px;top:767px"><span class="L">xauusdc</span></div>
<div class="ab t15 r" style="left:314px;width:86px;top:767px"><span class="L">677553298</span></div>
<div class="ab t15 r" style="left:404px;width:73px;top:767px"><span class="L">buy</span></div>
<div class="ab t15 r" style="left:481px;width:124px;top:767px"><span class="L">0.01</span></div>
<div class="ab t15 r" style="left:609px;width:124px;top:767px"><span class="L">4182.446</span></div>
<div class="ab t15 r" style="left:993px;width:171px;top:767px"><span class="L">2025.10.15 01:25:58</span></div>
<div class="ab t15 r" style="left:1168px;width:124px;top:767px"><span class="L">4178.684</span></div>
<div class="ab t15 r" style="left:1296px;width:137px;top:767px;color:#f01010"><span class="L">-3.70</span></div>
<div class="ab t15 r" style="left:1437px;width:121px;top:767px;color:#f01010"><span class="L">-0.09 %</span></div>
<div class="ab t15 r" style="left:1562px;width:320px;top:767px"><span class="L">qv2026904767</span></div>
<div class="ab" style="left:33px;top:789px;width:1854px;height:24px;background:#fff"></div>
<div class="ab" style="left:33px;top:813px;width:1854px;height:1px;background:#d4d4d4"></div>
<div class="ab" style="left:200px;top:789px;width:1px;height:25px;background:#d0d0d0"></div>
<div class="ab" style="left:314px;top:789px;width:1px;height:25px;background:#d0d0d0"></div>
<div class="ab" style="left:404px;top:789px;width:1px;height:25px;background:#d0d0d0"></div>
<div class="ab" style="left:481px;top:789px;width:1px;height:25px;background:#d0d0d0"></div>
<div class="ab" style="left:609px;top:789px;width:1px;height:25px;background:#d0d0d0"></div>
<div class="ab" style="left:737px;top:789px;width:1px;height:25px;background:#d0d0d0"></div>
<div class="ab" style="left:865px;top:789px;width:1px;height:25px;background:#d0d0d0"></div>
<div class="ab" style="left:993px;top:789px;width:1px;height:25px;background:#d0d0d0"></div>
<div class="ab" style="left:1168px;top:789px;width:1px;height:25px;background:#d0d0d0"></div>
<div class="ab" style="left:1296px;top:789px;width:1px;height:25px;background:#d0d0d0"></div>
<div class="ab" style="left:1437px;top:789px;width:1px;height:25px;background:#d0d0d0"></div>
<div class="ab" style="left:1562px;top:789px;width:1px;height:25px;background:#d0d0d0"></div>
<svg class="ab" style="left:38px;top:792px" width="14" height="19"><rect x="0.8" y="0.8" width="12.4" height="17.4" rx="2.5" fill="#fff" stroke="#1f6fb8" stroke-width="1.4"/><path d="M5.5 5 H8.5 M5.5 8 H8.5" stroke="#1f6fb8" stroke-width="1.3"/></svg>
<div class="ab t15" style="left:60px;top:792px"><span class="L">2025.10.15 01:1...</span></div>
<div class="ab t15 r" style="left:200px;width:110px;top:792px"><span class="L">xauusdc</span></div>
<div class="ab t15 r" style="left:314px;width:86px;top:792px"><span class="L">677456704</span></div>
<div class="ab t15 r" style="left:404px;width:73px;top:792px"><span class="L">buy</span></div>
<div class="ab t15 r" style="left:481px;width:124px;top:792px"><span class="L">0.01</span></div>
<div class="ab t15 r" style="left:609px;width:124px;top:792px"><span class="L">4180.044</span></div>
<div class="ab t15 r" style="left:993px;width:171px;top:792px"><span class="L">2025.10.15 01:25:58</span></div>
<div class="ab t15 r" style="left:1168px;width:124px;top:792px"><span class="L">4186.036</span></div>
<div class="ab t15 r" style="left:1296px;width:137px;top:792px;color:#1a1ae0"><span class="L">6.00</span></div>
<div class="ab t15 r" style="left:1437px;width:121px;top:792px;color:#1a1ae0"><span class="L">0.14 %</span></div>
<div class="ab t15 r" style="left:1562px;width:320px;top:792px"><span class="L">qv2026904767</span></div>
<div class="ab" style="left:33px;top:813px;width:1854px;height:22px;background:#c8c8c8"></div>
<svg class="ab" style="left:37px;top:817px" width="15" height="15"><circle cx="7.5" cy="7.5" r="6.5" fill="none" stroke="#000" stroke-width="1.2"/><path d="M7.5 3.5 V11.5 M3.5 7.5 H11.5" stroke="#000" stroke-width="1.2"/></svg>
<div class="ab" style="left:60px;top:817px;font-size:15px;line-height:18px;font-weight:bold;letter-spacing:0.1px">盈利: 1 985.00&nbsp; 信用: 0.00&nbsp; 入金: 1 000.00&nbsp; 提款: 0.00&nbsp; 结余: 2 985.00</div>
<div class="ab t15 r" style="left:1296px;width:137px;top:817px;font-weight:bold"><span class="L">1 985.00</span></div>
<div class="ab" style="left:1887px;top:588px;width:10px;height:247px;background:#fbfbfb;border-left:1px solid #d8d8d8"></div>
<div class="ab" style="left:1887px;top:608px;width:10px;height:1px;background:#d8d8d8"></div>
<svg class="ab" style="left:1888px;top:592px" width="9" height="10"><path d="M1 7 L6 2" stroke="#505050" stroke-width="1.2"/></svg>
<div class="ab" style="left:1887px;top:800px;width:10px;height:28px;background:#e8e8e8;border:1px solid #d0d0d0"></div>
<div class="ab" style="left:1896px;top:557px;width:4px;height:149px;background:#c4c4c4"></div>
<div class="ab" style="left:1896px;top:706px;width:4px;height:136px;background:#e4e4e4"></div>
<div class="ab" style="left:6px;top:835px;width:1890px;height:7px;background:#f0f0f0"></div>
<div class="ab" style="left:18px;top:836px;width:1850px;height:6px;background:#d4d4d4"></div>
<div class="ab" style="left:6px;top:800px;width:25px;height:35px;overflow:hidden"><div class="ab" style="left:2px;top:23px;font-size:15px;line-height:16px;color:#000;transform:rotate(-90deg)">箱</div></div>
<div class="ab" style="left:1766px;top:802px;font-size:28px;line-height:32px;font-weight:bold;color:rgba(140,134,134,0.85);transform:scaleX(0.95);transform-origin:0 0">518外汇网</div>
<div class="ab" style="left:1748px;top:-12px;font-size:13px;line-height:16px;color:#fff">用额  获盈</div>
<div class="ab" style="left:1808px;top:-2px;width:5px;height:5px;border-radius:50%;background:#3c8ce0"></div>
</body></html>
